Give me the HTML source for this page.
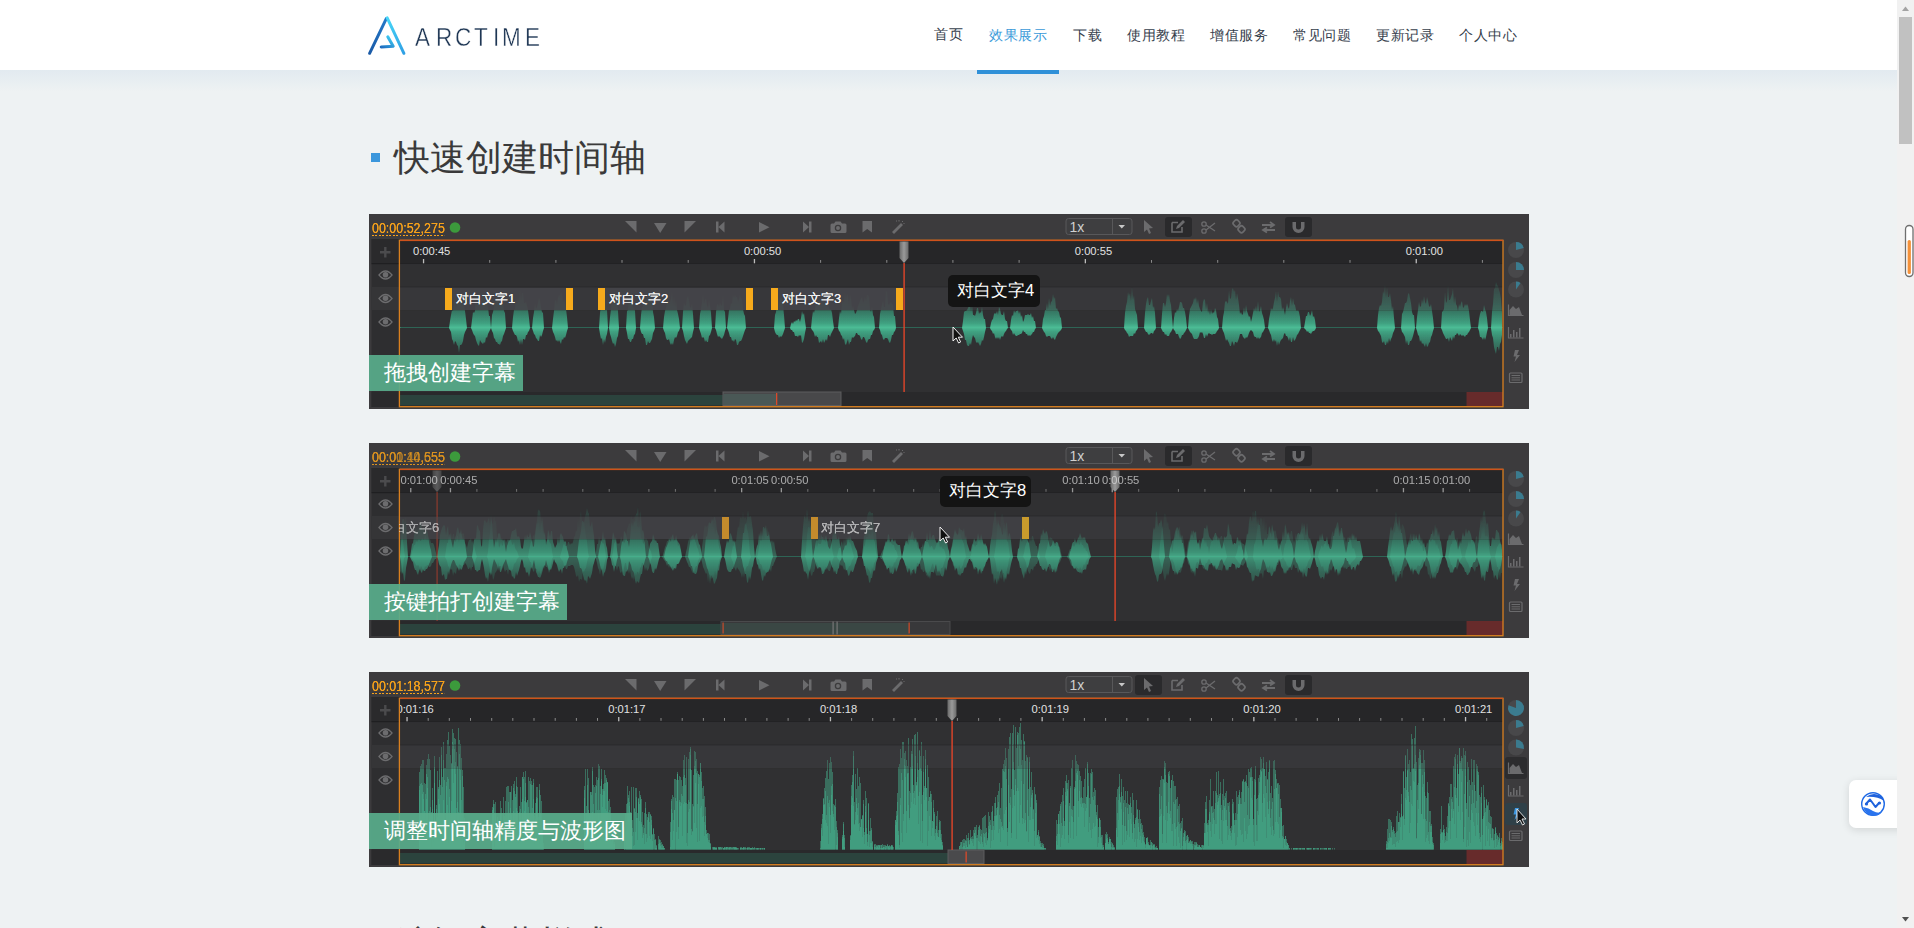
<!DOCTYPE html><html><head><meta charset="utf-8"><style>
html,body{margin:0;padding:0;}
body{width:1914px;height:928px;overflow:hidden;position:relative;background:#eef2f3;font-family:"Liberation Sans",sans-serif;}
.abs{position:absolute;}
.lgl{position:absolute;top:22.5px;font-size:25px;line-height:28px;color:#1d3553;-webkit-text-stroke:0.4px #fff;transform:scaleX(0.9);transform-origin:0 0;}
#hdr{position:absolute;left:0;top:0;width:1897px;height:70px;background:#fff;}
#hshadow{position:absolute;left:0;top:70px;width:1897px;height:22px;background:linear-gradient(#e2eaf0,#eef2f3);}
.nav{position:absolute;top:26px;font-size:14px;letter-spacing:0.6px;color:#36404c;white-space:nowrap;line-height:16px;}
.panel{position:absolute;left:369px;width:1160px;height:195px;background:#3c3b3d;overflow:hidden;}
.tc{position:absolute;left:3px;top:5.6px;font-size:14.5px;color:#f7a21b;line-height:16px;transform:scaleX(0.86);transform-origin:0 0;text-shadow:0 0 0.3px #f7a21b;}
.tc:after{content:"";position:absolute;left:0;right:1px;top:15.2px;height:1.2px;background:repeating-linear-gradient(90deg,#f7a21b 0 2.2px,transparent 2.2px 4px);}
.rl{position:absolute;top:31px;font-size:11.2px;line-height:13px;color:#e2e2e2;white-space:nowrap;}
.st{position:absolute;top:77px;font-size:13px;line-height:16px;color:#f2f2f2;white-space:nowrap;text-shadow:0 0 0.5px #fff;}
.tt{position:absolute;font-size:16.6px;line-height:18px;color:#fff;white-space:nowrap;}
.gl{position:absolute;left:0;top:141px;height:36px;background:rgba(88,172,139,0.93);color:#fff;font-size:22px;line-height:36px;text-indent:15px;white-space:nowrap;}
.one{position:absolute;left:700.5px;top:4.5px;font-size:14px;line-height:16px;color:#d0d0d0;}
</style></head><body><div id="hdr"></div><div id="hshadow"></div><svg class="abs" style="left:366px;top:14px" width="44" height="44" viewBox="0 0 44 44">
<defs><linearGradient id="lg1" gradientUnits="userSpaceOnUse" x1="3.4" y1="39.4" x2="20" y2="5"><stop offset="0" stop-color="#1a5aa6"/><stop offset="1" stop-color="#2478c8"/></linearGradient>
<linearGradient id="lg2" gradientUnits="userSpaceOnUse" x1="21" y1="3.5" x2="38" y2="39.4"><stop offset="0" stop-color="#48d8f8"/><stop offset="1" stop-color="#2f9fe4"/></linearGradient>
<linearGradient id="lg3" gradientUnits="userSpaceOnUse" x1="22" y1="22" x2="15" y2="33"><stop offset="0" stop-color="#3cc6f0"/><stop offset="1" stop-color="#1e6cc0"/></linearGradient></defs>
<path d="M3.6 39.3 L20.3 4.6" stroke="url(#lg1)" stroke-width="3" stroke-linecap="round"/>
<path d="M21.2 3.9 L37.9 39.3" stroke="url(#lg2)" stroke-width="3" stroke-linecap="round"/>
<path d="M21.8 22.8 L27.2 32.3 L15.2 32.9" fill="none" stroke="url(#lg3)" stroke-width="3" stroke-linecap="round" stroke-linejoin="round"/>
</svg><div class="lgl" style="left:415.0px">A</div><div class="lgl" style="left:435.6px">R</div><div class="lgl" style="left:455.2px">C</div><div class="lgl" style="left:473.8px">T</div><div class="lgl" style="left:492.8px">I</div><div class="lgl" style="left:502.4px">M</div><div class="lgl" style="left:525.4px">E</div><div class="nav" style="left:934px;top:26.4px;color:#36404c">首页</div><div class="nav" style="left:989px;top:27.4px;color:#3a9ad9">效果展示</div><div class="nav" style="left:1073px;top:27.4px;color:#36404c">下载</div><div class="nav" style="left:1127px;top:27.4px;color:#36404c">使用教程</div><div class="nav" style="left:1210px;top:27.4px;color:#36404c">增值服务</div><div class="nav" style="left:1293px;top:27.4px;color:#36404c">常见问题</div><div class="nav" style="left:1376px;top:27.4px;color:#36404c">更新记录</div><div class="nav" style="left:1459px;top:27.4px;color:#36404c">个人中心</div><div class="abs" style="left:977px;top:70px;width:82px;height:4px;background:#2f90d8"></div><div class="abs" style="left:371px;top:153px;width:9px;height:9px;background:#3b97dc"></div><div class="abs" style="left:394px;top:137px;font-size:36px;line-height:42px;color:#3a3a3a">快速创建时间轴</div><div class="abs" style="left:395px;top:923px;font-size:36px;line-height:42px;color:#3a3a3a">编辑字幕样式</div><div class="panel" style="top:214px"><svg width="1160" height="195" style="position:absolute;left:0;top:0"><defs><linearGradient id="phg1" x1="0" x2="1" y1="0" y2="0"><stop offset="0" stop-color="#6a6a6a"/><stop offset="0.5" stop-color="#9a9a9a"/><stop offset="1" stop-color="#6a6a6a"/></linearGradient><linearGradient id="wg1" gradientUnits="userSpaceOnUse" x1="0" y1="71.5" x2="0" y2="155.5"><stop offset="0" stop-color="#358f74" stop-opacity="0.25"/><stop offset="0.3" stop-color="#3a9f7f" stop-opacity="0.62"/><stop offset="0.45" stop-color="#41ab88" stop-opacity="0.92"/><stop offset="0.5" stop-color="#4cbc95"/><stop offset="0.55" stop-color="#41ab88" stop-opacity="0.92"/><stop offset="0.7" stop-color="#3a9f7f" stop-opacity="0.62"/><stop offset="1" stop-color="#358f74" stop-opacity="0.25"/></linearGradient><filter id="bl1" x="-1%" y="-10%" width="102%" height="120%"><feGaussianBlur stdDeviation="0.55"/></filter><linearGradient id="rg1" gradientUnits="userSpaceOnUse" x1="0" y1="50" x2="0" y2="178"><stop offset="0" stop-color="#3c9c7e" stop-opacity="0.55"/><stop offset="0.6" stop-color="#40a886" stop-opacity="0.85"/><stop offset="1" stop-color="#45b28e"/></linearGradient><clipPath id="mc1"><rect x="31" y="27" width="1103" height="165"/></clipPath></defs><rect x="796" y="3" width="27" height="20" rx="3" fill="#2a2a2c"/><rect x="916" y="3" width="27" height="20" rx="3" fill="#2a2a2c"/><path d="M256 7 H267.5 V18.5 Z" fill="#6b6b6d"/><path d="M285 9 H297.5 L291.2 19 Z" fill="#6b6b6d"/><path d="M315.5 7 H327 L315.5 18.5 Z" fill="#6b6b6d"/><path d="M347 7.5 H349.5 V18.5 H347 Z M349.5 13 L355.5 7.5 V18.5 Z" fill="#6b6b6d"/><path d="M390 8 L400.5 13.2 L390 18.5 Z" fill="#6b6b6d"/><path d="M434 7.5 L440 13 L434 18.5 Z M440 7.5 H442.5 V18.5 H440 Z" fill="#6b6b6d"/><path d="M462 9.5 h3 l1.5 -2 h5 l1.5 2 h3 a1.5 1.5 0 0 1 1.5 1.5 v6.5 a1.5 1.5 0 0 1 -1.5 1.5 h-13 a1.5 1.5 0 0 1 -1.5 -1.5 v-6.5 a1.5 1.5 0 0 1 1.5 -1.5 Z" fill="#6b6b6d"/><circle cx="469" cy="14" r="2.6" fill="none" stroke="#3c3b3d" stroke-width="1.3"/><path d="M493.5 7 H503 V18.5 L498.2 15 L493.5 18.5 Z" fill="#6b6b6d"/><path d="M523 18 L532 9 L534 11 L525 20 Z" fill="#6b6b6d"/><path d="M527 7 l1 0 M530 6 l0 1.5 M533 7 l1 1 M535 9 l0 1" stroke="#6b6b6d" stroke-width="1"/><rect x="697" y="4.5" width="66" height="16" rx="2.5" fill="#3e3e40" stroke="#58585a" stroke-width="1"/><line x1="743.5" y1="5" x2="743.5" y2="20" stroke="#58585a" stroke-width="1"/><path d="M749.5 11 H756 L752.8 14.5 Z" fill="#c8c8c8"/><path d="M775 6 L784 14 L780 14.5 L782 19 L780 20 L778 15.5 L775 18 Z" fill="#6b6b6d"/><path d="M803 8.5 H809 M803 8.5 V18 H813 V13" fill="none" stroke="#6b6b6d" stroke-width="1.6"/><path d="M807 15 L808 12 L814 6 L816 8 L810 14 Z" fill="#6b6b6d"/><circle cx="835" cy="10" r="2.2" fill="none" stroke="#6b6b6d" stroke-width="1.3"/><circle cx="835" cy="17" r="2.2" fill="none" stroke="#6b6b6d" stroke-width="1.3"/><path d="M837 11 L846 17 M837 16 L846 9" stroke="#6b6b6d" stroke-width="1.3"/><rect x="864.5" y="6.3" width="6" height="6" rx="2" transform="rotate(45 867.5 9.3)" fill="none" stroke="#6b6b6d" stroke-width="1.7"/><rect x="869.5" y="12.3" width="6" height="6" rx="2" transform="rotate(45 872.5 15.3)" fill="none" stroke="#6b6b6d" stroke-width="1.7"/><path d="M893 11 H904 M901 8 L905 11 L901 13.5 M906 16 H895 M898 13.5 L894 16 L898 18.5" fill="none" stroke="#6b6b6d" stroke-width="1.8"/><path d="M923.5 8 V13 a6 6 0 0 0 12 0 V8 h-3.5 V13 a2.5 2.5 0 0 1 -5 0 V8 Z" fill="#6b6b6d"/><circle cx="86" cy="13.5" r="5.3" fill="#3c9a3c"/><rect x="2.5" y="25" width="28" height="168" fill="#2e2e30"/><rect x="2.5" y="25" width="28" height="24" fill="#2a2a2c"/><rect x="2.5" y="49" width="28" height="1.2" fill="#1f1f21"/><rect x="2.5" y="73" width="28" height="23" fill="#353537"/><rect x="2.5" y="178" width="28" height="15" fill="#2a2a2c"/><path d="M11 38.3 H21.5 M16.3 33 V43.5" stroke="#4b4b4d" stroke-width="2.4"/><path d="M10.0 61 Q16.5 53 23.0 61 Q16.5 69 10.0 61 Z" fill="none" stroke="#6c6c6e" stroke-width="1.3"/><circle cx="16.5" cy="60.7" r="2.8" fill="#6c6c6e"/><path d="M10.0 84.5 Q16.5 76.5 23.0 84.5 Q16.5 92.5 10.0 84.5 Z" fill="none" stroke="#6c6c6e" stroke-width="1.3"/><circle cx="16.5" cy="84.2" r="2.8" fill="#6c6c6e"/><path d="M10.0 108 Q16.5 100 23.0 108 Q16.5 116 10.0 108 Z" fill="none" stroke="#6c6c6e" stroke-width="1.3"/><circle cx="16.5" cy="107.7" r="2.8" fill="#6c6c6e"/><g clip-path="url(#mc1)"><rect x="31" y="27" width="1103" height="22.5" fill="#262628"/><rect x="31" y="49.3" width="1103" height="1" fill="#1d1d1f"/><rect x="31" y="50.3" width="1103" height="128" fill="#303032"/><rect x="31" y="178" width="1103" height="14" fill="#29292b"/><rect x="31" y="113.0" width="1103" height="1" fill="#2e6455"/><path d="M31,113.5L32,114L33,114L34,114L35,114L36,114L37,114L38,114L39,114L40,114L41,114L42,114L43,114L44,114L45,114L46,114L47,114L48,114L49,114L50,114L51,114L52,114L53,114L54,114L55,114L56,114L57,114L58,114L59,114L60,114L61,114L62,114L63,114L64,114L65,114L66,114L67,114L68,114L69,114L70,114L71,114L72,114L73,114L74,114L75,114L76,114L77,114L78,114L79,114L80,114L81,107L82,101L83,96L84,97L85,88L86,83L87,93L88,90L89,82L90,84L91,78L92,92L93,85L94,90L95,92L96,97L97,105L98,114L99,114L100,114L101,114L102,114L103,106L104,98L105,99L106,97L107,83L108,93L109,86L110,90L111,88L112,85L113,79L114,82L115,84L116,84L117,87L118,90L119,93L120,102L121,102L122,114L123,101L124,98L125,93L126,85L127,92L128,79L129,86L130,92L131,84L132,83L133,86L134,90L135,97L136,99L137,114L138,114L139,114L140,114L141,114L142,114L143,114L144,103L145,96L146,95L147,86L148,92L149,83L150,89L151,77L152,87L153,79L154,79L155,89L156,89L157,88L158,92L159,96L160,104L161,114L162,114L163,114L164,104L165,98L166,90L167,95L168,93L169,89L170,84L171,87L172,94L173,98L174,99L175,114L176,114L177,114L178,114L179,114L180,114L181,114L182,114L183,114L184,105L185,97L186,87L187,86L188,91L189,84L190,81L191,82L192,78L193,80L194,89L195,85L196,89L197,95L198,103L199,114L200,114L201,114L202,114L203,114L204,114L205,114L206,114L207,114L208,114L209,114L210,114L211,114L212,114L213,114L214,114L215,114L216,114L217,114L218,114L219,114L220,114L221,114L222,114L223,114L224,114L225,114L226,114L227,114L228,114L229,114L230,114L231,99L232,92L233,87L234,86L235,81L236,82L237,93L238,96L239,114L240,114L241,103L242,95L243,87L244,91L245,87L246,85L247,82L248,87L249,97L250,114L251,114L252,114L253,114L254,114L255,114L256,114L257,114L258,97L259,96L260,83L261,84L262,77L263,84L264,94L265,93L266,97L267,114L268,114L269,114L270,114L271,114L272,101L273,93L274,93L275,83L276,85L277,87L278,82L279,84L280,77L281,80L282,85L283,87L284,98L285,103L286,114L287,114L288,114L289,114L290,114L291,114L292,114L293,114L294,114L295,103L296,97L297,94L298,90L299,84L300,91L301,88L302,85L303,78L304,92L305,83L306,93L307,87L308,96L309,100L310,105L311,114L312,114L313,114L314,98L315,89L316,92L317,91L318,84L319,82L320,87L321,93L322,94L323,90L324,100L325,114L326,114L327,114L328,114L329,114L330,114L331,100L332,95L333,89L334,81L335,90L336,86L337,85L338,91L339,94L340,86L341,92L342,99L343,114L344,114L345,114L346,114L347,98L348,91L349,90L350,93L351,89L352,91L353,92L354,82L355,96L356,98L357,114L358,114L359,105L360,96L361,95L362,89L363,90L364,81L365,84L366,81L367,83L368,83L369,88L370,85L371,81L372,84L373,86L374,95L375,100L376,102L377,114L378,114L379,114L380,114L381,114L382,114L383,114L384,114L385,114L386,114L387,114L388,114L389,114L390,114L391,114L392,114L393,114L394,114L395,114L396,114L397,114L398,114L399,114L400,114L401,114L402,114L403,114L404,114L405,114L406,101L407,98L408,87L409,80L410,90L411,85L412,82L413,87L414,91L415,101L416,114L417,114L418,114L419,114L420,114L421,114L422,110L423,108L424,110L425,107L426,108L427,106L428,107L429,105L430,105L431,108L432,104L433,97L434,101L435,99L436,107L437,114L438,114L439,114L440,114L441,114L442,114L443,104L444,97L445,99L446,95L447,90L448,92L449,90L450,85L451,86L452,92L453,83L454,85L455,91L456,88L457,84L458,95L459,88L460,94L461,96L462,95L463,99L464,107L465,114L466,114L467,114L468,114L469,114L470,104L471,97L472,100L473,89L474,87L475,89L476,79L477,86L478,80L479,82L480,92L481,81L482,85L483,95L484,92L485,96L486,100L487,99L488,96L489,92L490,90L491,87L492,85L493,83L494,89L495,87L496,83L497,88L498,81L499,81L500,83L501,95L502,98L503,93L504,101L505,103L506,114L507,114L508,114L509,114L510,114L511,100L512,95L513,91L514,87L515,93L516,93L517,77L518,78L519,90L520,91L521,89L522,88L523,90L524,91L525,102L526,102L527,114L528,114L529,114L530,114L531,114L532,114L533,114L534,114L535,114L536,114L537,114L538,114L539,114L540,114L541,114L542,114L543,114L544,114L545,114L546,114L547,114L548,114L549,114L550,114L551,114L552,114L553,114L554,114L555,114L556,114L557,114L558,114L559,114L560,114L561,114L562,114L563,114L564,114L565,114L566,114L567,114L568,114L569,114L570,114L571,114L572,114L573,114L574,114L575,114L576,114L577,114L578,114L579,114L580,114L581,114L582,114L583,114L584,114L585,114L586,114L587,114L588,114L589,114L590,114L591,114L592,114L593,114L594,107L595,98L596,97L597,97L598,96L599,94L600,92L601,90L602,98L603,91L604,101L605,101L606,102L607,99L608,94L609,94L610,100L611,98L612,99L613,93L614,101L615,105L616,105L617,114L618,114L619,114L620,114L621,114L622,109L623,106L624,105L625,100L626,99L627,100L628,97L629,101L630,93L631,95L632,100L633,101L634,101L635,97L636,105L637,107L638,107L639,114L640,114L641,114L642,106L643,101L644,102L645,96L646,99L647,97L648,97L649,96L650,100L651,97L652,103L653,101L654,108L655,106L656,101L657,101L658,101L659,100L660,101L661,101L662,99L663,104L664,102L665,107L666,107L667,114L668,114L669,114L670,114L671,114L672,114L673,114L674,105L675,102L676,96L677,96L678,89L679,96L680,84L681,92L682,88L683,87L684,80L685,85L686,83L687,95L688,94L689,97L690,98L691,103L692,104L693,114L694,114L695,114L696,114L697,114L698,114L699,114L700,114L701,114L702,114L703,114L704,114L705,114L706,114L707,114L708,114L709,114L710,114L711,114L712,114L713,114L714,114L715,114L716,114L717,114L718,114L719,114L720,114L721,114L722,114L723,114L724,114L725,114L726,114L727,114L728,114L729,114L730,114L731,114L732,114L733,114L734,114L735,114L736,114L737,114L738,114L739,114L740,114L741,114L742,114L743,114L744,114L745,114L746,114L747,114L748,114L749,114L750,114L751,114L752,114L753,114L754,114L755,114L756,99L757,92L758,88L759,78L760,82L761,79L762,87L763,73L764,86L765,81L766,95L767,98L768,101L769,114L770,114L771,114L772,114L773,114L774,114L775,114L776,99L777,90L778,85L779,83L780,91L781,91L782,87L783,84L784,94L785,92L786,99L787,114L788,114L789,114L790,114L791,114L792,114L793,100L794,89L795,89L796,93L797,89L798,80L799,83L800,80L801,87L802,91L803,103L804,114L805,104L806,98L807,99L808,95L809,97L810,93L811,88L812,88L813,89L814,94L815,94L816,98L817,104L818,114L819,114L820,102L821,95L822,93L823,91L824,89L825,84L826,86L827,83L828,90L829,85L830,92L831,95L832,97L833,98L834,88L835,85L836,86L837,96L838,89L839,99L840,95L841,101L842,95L843,100L844,98L845,99L846,94L847,96L848,103L849,105L850,114L851,114L852,114L853,114L854,103L855,98L856,88L857,87L858,88L859,90L860,76L861,85L862,84L863,75L864,74L865,78L866,76L867,86L868,79L869,84L870,91L871,100L872,98L873,101L874,100L875,93L876,100L877,91L878,97L879,100L880,103L881,102L882,108L883,104L884,99L885,94L886,97L887,92L888,98L889,87L890,98L891,96L892,92L893,99L894,102L895,106L896,114L897,114L898,114L899,114L900,105L901,100L902,94L903,96L904,94L905,88L906,84L907,77L908,88L909,77L910,83L911,83L912,85L913,96L914,93L915,96L916,101L917,94L918,89L919,93L920,95L921,87L922,83L923,92L924,84L925,90L926,91L927,96L928,97L929,96L930,98L931,103L932,114L933,114L934,114L935,114L936,108L937,102L938,102L939,98L940,98L941,102L942,100L943,96L944,103L945,102L946,106L947,114L948,114L949,114L950,114L951,114L952,114L953,114L954,114L955,114L956,114L957,114L958,114L959,114L960,114L961,114L962,114L963,114L964,114L965,114L966,114L967,114L968,114L969,114L970,114L971,114L972,114L973,114L974,114L975,114L976,114L977,114L978,114L979,114L980,114L981,114L982,114L983,114L984,114L985,114L986,114L987,114L988,114L989,114L990,114L991,114L992,114L993,114L994,114L995,114L996,114L997,114L998,114L999,114L1000,114L1001,114L1002,114L1003,114L1004,114L1005,114L1006,114L1007,114L1008,114L1009,101L1010,94L1011,91L1012,92L1013,88L1014,77L1015,80L1016,71L1017,84L1018,73L1019,83L1020,83L1021,79L1022,86L1023,96L1024,92L1025,104L1026,114L1027,114L1028,114L1029,114L1030,114L1031,114L1032,114L1033,100L1034,98L1035,94L1036,89L1037,89L1038,87L1039,80L1040,79L1041,84L1042,89L1043,98L1044,101L1045,101L1046,114L1047,114L1048,103L1049,96L1050,88L1051,93L1052,92L1053,85L1054,90L1055,82L1056,88L1057,90L1058,83L1059,87L1060,92L1061,93L1062,90L1063,97L1064,104L1065,114L1066,114L1067,114L1068,114L1069,114L1070,114L1071,114L1072,114L1073,98L1074,97L1075,95L1076,78L1077,89L1078,87L1079,71L1080,86L1081,86L1082,83L1083,80L1084,74L1085,90L1086,82L1087,90L1088,92L1089,97L1090,90L1091,93L1092,89L1093,87L1094,94L1095,93L1096,90L1097,92L1098,90L1099,92L1100,97L1101,106L1102,114L1103,114L1104,114L1105,114L1106,114L1107,114L1108,114L1109,114L1110,105L1111,100L1112,97L1113,97L1114,98L1115,91L1116,95L1117,98L1118,104L1119,114L1120,114L1121,114L1122,114L1123,98L1124,90L1125,75L1126,74L1127,68L1128,71L1129,72L1130,76L1131,79L1132,85L1133,99L1133,121L1132,128L1131,130L1130,137L1129,133L1128,133L1127,140L1126,137L1125,133L1124,124L1123,121L1122,114L1121,114L1120,114L1119,114L1118,118L1117,123L1116,126L1115,123L1114,126L1113,124L1112,123L1111,123L1110,117L1109,114L1108,114L1107,114L1106,114L1105,114L1104,114L1103,114L1102,114L1101,116L1100,118L1099,119L1098,121L1097,121L1096,123L1095,122L1094,121L1093,122L1092,121L1091,120L1090,122L1089,120L1088,119L1087,121L1086,121L1085,125L1084,122L1083,127L1082,125L1081,123L1080,128L1079,124L1078,125L1077,125L1076,123L1075,121L1074,119L1073,116L1072,114L1071,114L1070,114L1069,114L1068,114L1067,114L1066,114L1065,114L1064,117L1063,121L1062,123L1061,128L1060,129L1059,132L1058,133L1057,129L1056,133L1055,131L1054,129L1053,130L1052,126L1051,128L1050,122L1049,121L1048,117L1047,114L1046,114L1045,118L1044,122L1043,125L1042,127L1041,127L1040,131L1039,131L1038,126L1037,130L1036,123L1035,121L1034,119L1033,118L1032,114L1031,114L1030,114L1029,114L1028,114L1027,114L1026,114L1025,117L1024,119L1023,123L1022,125L1021,128L1020,124L1019,130L1018,127L1017,131L1016,131L1015,127L1014,129L1013,128L1012,122L1011,120L1010,118L1009,117L1008,114L1007,114L1006,114L1005,114L1004,114L1003,114L1002,114L1001,114L1000,114L999,114L998,114L997,114L996,114L995,114L994,114L993,114L992,114L991,114L990,114L989,114L988,114L987,114L986,114L985,114L984,114L983,114L982,114L981,114L980,114L979,114L978,114L977,114L976,114L975,114L974,114L973,114L972,114L971,114L970,114L969,114L968,114L967,114L966,114L965,114L964,114L963,114L962,114L961,114L960,114L959,114L958,114L957,114L956,114L955,114L954,114L953,114L952,114L951,114L950,114L949,114L948,114L947,114L946,116L945,117L944,117L943,118L942,120L941,119L940,119L939,117L938,118L937,116L936,115L935,114L934,114L933,114L932,114L931,116L930,118L929,120L928,121L927,124L926,126L925,127L924,123L923,128L922,128L921,123L920,127L919,124L918,122L917,122L916,119L915,120L914,124L913,125L912,126L911,128L910,131L909,127L908,132L907,126L906,128L905,125L904,128L903,126L902,121L901,119L900,116L899,114L898,114L897,114L896,114L895,116L894,118L893,119L892,123L891,124L890,125L889,123L888,125L887,123L886,123L885,122L884,118L883,117L882,116L881,117L880,119L879,122L878,124L877,123L876,125L875,124L874,123L873,120L872,120L871,120L870,124L869,127L868,129L867,128L866,128L865,132L864,129L863,127L862,132L861,132L860,129L859,127L858,125L857,127L856,123L855,119L854,117L853,114L852,114L851,114L850,114L849,116L848,117L847,119L846,120L845,120L844,120L843,121L842,120L841,120L840,119L839,120L838,123L837,120L836,124L835,124L834,120L833,118L832,119L831,118L830,122L829,124L828,125L827,125L826,125L825,125L824,123L823,120L822,119L821,118L820,116L819,114L818,114L817,116L816,118L815,119L814,121L813,121L812,124L811,125L810,123L809,120L808,120L807,120L806,117L805,116L804,114L803,116L802,118L801,119L800,122L799,122L798,122L797,120L796,121L795,118L794,118L793,116L792,114L791,114L790,114L789,114L788,114L787,114L786,116L785,117L784,120L783,119L782,119L781,120L780,121L779,120L778,118L777,118L776,116L775,114L774,114L773,114L772,114L771,114L770,114L769,114L768,116L767,117L766,120L765,119L764,122L763,122L762,122L761,122L760,123L759,120L758,119L757,117L756,116L755,114L754,114L753,114L752,114L751,114L750,114L749,114L748,114L747,114L746,114L745,114L744,114L743,114L742,114L741,114L740,114L739,114L738,114L737,114L736,114L735,114L734,114L733,114L732,114L731,114L730,114L729,114L728,114L727,114L726,114L725,114L724,114L723,114L722,114L721,114L720,114L719,114L718,114L717,114L716,114L715,114L714,114L713,114L712,114L711,114L710,114L709,114L708,114L707,114L706,114L705,114L704,114L703,114L702,114L701,114L700,114L699,114L698,114L697,114L696,114L695,114L694,114L693,114L692,116L691,117L690,118L689,119L688,121L687,123L686,126L685,125L684,123L683,125L682,124L681,122L680,122L679,122L678,123L677,122L676,119L675,118L674,116L673,114L672,114L671,114L670,114L669,114L668,114L667,114L666,115L665,118L664,118L663,120L662,121L661,122L660,121L659,122L658,120L657,120L656,118L655,118L654,116L653,119L652,120L651,120L650,121L649,121L648,122L647,122L646,121L645,119L644,121L643,117L642,116L641,114L640,114L639,114L638,115L637,117L636,118L635,120L634,123L633,122L632,123L631,126L630,123L629,125L628,123L627,125L626,123L625,119L624,120L623,117L622,116L621,114L620,114L619,114L618,114L617,114L616,118L615,123L614,127L613,126L612,130L611,132L610,130L609,128L608,129L607,128L606,124L605,123L604,121L603,125L602,131L601,129L600,132L599,132L598,131L597,126L596,126L595,120L594,117L593,114L592,114L591,114L590,114L589,114L588,114L587,114L586,114L585,114L584,114L583,114L582,114L581,114L580,114L579,114L578,114L577,114L576,114L575,114L574,114L573,114L572,114L571,114L570,114L569,114L568,114L567,114L566,114L565,114L564,114L563,114L562,114L561,114L560,114L559,114L558,114L557,114L556,114L555,114L554,114L553,114L552,114L551,114L550,114L549,114L548,114L547,114L546,114L545,114L544,114L543,114L542,114L541,114L540,114L539,114L538,114L537,114L536,114L535,114L534,114L533,114L532,114L531,114L530,114L529,114L528,114L527,114L526,117L525,118L524,121L523,121L522,126L521,129L520,128L519,125L518,124L517,124L516,124L515,126L514,125L513,121L512,120L511,116L510,114L509,114L508,114L507,114L506,114L505,116L504,117L503,121L502,121L501,125L500,125L499,126L498,129L497,128L496,125L495,123L494,123L493,126L492,125L491,122L490,121L489,121L488,119L487,119L486,122L485,123L484,124L483,123L482,128L481,128L480,131L479,125L478,128L477,131L476,130L475,124L474,126L473,122L472,121L471,118L470,117L469,114L468,114L467,114L466,114L465,114L464,116L463,118L462,120L461,123L460,121L459,121L458,127L457,125L456,127L455,129L454,125L453,129L452,127L451,128L450,129L449,123L448,123L447,121L446,123L445,119L444,117L443,116L442,114L441,114L440,114L439,114L438,114L437,114L436,119L435,125L434,128L433,129L432,121L431,122L430,121L429,123L428,122L427,122L426,122L425,118L424,118L423,116L422,116L421,114L420,114L419,114L418,114L417,114L416,114L415,117L414,120L413,122L412,123L411,122L410,124L409,121L408,121L407,120L406,118L405,114L404,114L403,114L402,114L401,114L400,114L399,114L398,114L397,114L396,114L395,114L394,114L393,114L392,114L391,114L390,114L389,114L388,114L387,114L386,114L385,114L384,114L383,114L382,114L381,114L380,114L379,114L378,114L377,114L376,116L375,119L374,122L373,125L372,127L371,127L370,128L369,131L368,131L367,126L366,125L365,128L364,126L363,127L362,123L361,123L360,119L359,116L358,114L357,114L356,117L355,121L354,123L353,125L352,124L351,123L350,122L349,123L348,120L347,116L346,114L345,114L344,114L343,114L342,118L341,121L340,122L339,128L338,128L337,126L336,128L335,124L334,123L333,124L332,120L331,117L330,114L329,114L328,114L327,114L326,114L325,114L324,118L323,123L322,124L321,125L320,126L319,127L318,130L317,128L316,126L315,122L314,117L313,114L312,114L311,114L310,117L309,118L308,122L307,124L306,123L305,126L304,131L303,129L302,131L301,129L300,125L299,126L298,126L297,124L296,119L295,117L294,114L293,114L292,114L291,114L290,114L289,114L288,114L287,114L286,114L285,117L284,119L283,125L282,127L281,129L280,129L279,127L278,131L277,131L276,124L275,124L274,120L273,120L272,118L271,114L270,114L269,114L268,114L267,114L266,120L265,121L264,125L263,125L262,128L261,128L260,125L259,125L258,119L257,114L256,114L255,114L254,114L253,114L252,114L251,114L250,114L249,122L248,124L247,130L246,133L245,129L244,130L243,127L242,123L241,120L240,114L239,114L238,120L237,123L236,129L235,125L234,131L233,124L232,125L231,120L230,114L229,114L228,114L227,114L226,114L225,114L224,114L223,114L222,114L221,114L220,114L219,114L218,114L217,114L216,114L215,114L214,114L213,114L212,114L211,114L210,114L209,114L208,114L207,114L206,114L205,114L204,114L203,114L202,114L201,114L200,114L199,114L198,117L197,121L196,124L195,123L194,126L193,125L192,130L191,128L190,126L189,128L188,126L187,127L186,123L185,120L184,118L183,114L182,114L181,114L180,114L179,114L178,114L177,114L176,114L175,114L174,117L173,121L172,123L171,121L170,127L169,127L168,125L167,124L166,121L165,120L164,117L163,114L162,114L161,114L160,117L159,118L158,121L157,121L156,126L155,125L154,125L153,131L152,125L151,131L150,126L149,128L148,123L147,121L146,121L145,119L144,117L143,114L142,114L141,114L140,114L139,114L138,114L137,114L136,117L135,120L134,122L133,127L132,128L131,131L130,130L129,130L128,128L127,128L126,125L125,124L124,119L123,117L122,114L121,116L120,118L119,120L118,124L117,123L116,129L115,128L114,130L113,129L112,128L111,126L110,132L109,131L108,129L107,126L106,122L105,121L104,119L103,116L102,114L101,114L100,114L99,114L98,114L97,116L96,118L95,121L94,127L93,130L92,131L91,131L90,139L89,132L88,131L87,128L86,127L85,131L84,127L83,125L82,118L81,116L80,114L79,114L78,114L77,114L76,114L75,114L74,114L73,114L72,114L71,114L70,114L69,114L68,114L67,114L66,114L65,114L64,114L63,114L62,114L61,114L60,114L59,114L58,114L57,114L56,114L55,114L54,114L53,114L52,114L51,114L50,114L49,114L48,114L47,114L46,114L45,114L44,114L43,114L42,114L41,114L40,114L39,114L38,114L37,114L36,114L35,114L34,114L33,114L32,114L31,114Z" fill="url(#wg1)" filter="url(#bl1)"/><rect x="31" y="73" width="1103" height="23" fill="#4a4a4e" opacity="0.28"/><rect x="31" y="72.5" width="1103" height="1" fill="#262628" opacity="0.6"/><rect x="31" y="96" width="1103" height="1" fill="#2a2a2c" opacity="0.25"/><g opacity="1"><rect x="53.9" y="45" width="1.3" height="4.299999999999997" fill="#bdbdbd"/><rect x="120.2" y="46" width="1" height="2.799999999999997" fill="#8a8a8a"/><rect x="186.4" y="46" width="1" height="2.799999999999997" fill="#8a8a8a"/><rect x="252.5" y="46" width="1" height="2.799999999999997" fill="#8a8a8a"/><rect x="318.7" y="46" width="1" height="2.799999999999997" fill="#8a8a8a"/><rect x="384.8" y="45" width="1.3" height="4.299999999999997" fill="#bdbdbd"/><rect x="451.1" y="46" width="1" height="2.799999999999997" fill="#8a8a8a"/><rect x="517.3" y="46" width="1" height="2.799999999999997" fill="#8a8a8a"/><rect x="583.4" y="46" width="1" height="2.799999999999997" fill="#8a8a8a"/><rect x="649.6" y="46" width="1" height="2.799999999999997" fill="#8a8a8a"/><rect x="715.7" y="45" width="1.3" height="4.299999999999997" fill="#bdbdbd"/><rect x="782.0" y="46" width="1" height="2.799999999999997" fill="#8a8a8a"/><rect x="848.2" y="46" width="1" height="2.799999999999997" fill="#8a8a8a"/><rect x="914.3" y="46" width="1" height="2.799999999999997" fill="#8a8a8a"/><rect x="980.5" y="46" width="1" height="2.799999999999997" fill="#8a8a8a"/><rect x="1046.6" y="45" width="1.3" height="4.299999999999997" fill="#bdbdbd"/><rect x="1112.9" y="46" width="1" height="2.799999999999997" fill="#8a8a8a"/></g><rect x="31" y="181" width="323" height="10.5" fill="#2b433d"/><rect x="354" y="178" width="118" height="13.5" fill="#48484a" stroke="#5c5c5e" stroke-width="1"/><rect x="354.5" y="180" width="53" height="11" fill="#4a5856"/><rect x="407" y="179" width="1.3" height="12" fill="#d94a2a"/><rect x="1097.5" y="178" width="36.5" height="14" fill="#672b2b"/></g><rect x="30.4" y="26.3" width="1103.6" height="166.4" fill="none" stroke="#d9801f" stroke-width="1.3"/><rect x="31" y="25.8" width="1103" height="1.3" fill="#d0521b"/><g opacity="1"><rect x="534.4" y="49" width="1.4" height="129" fill="#e0452a"/><path d="M530.5 27.5 H539.5 V44 L535 49 L530.5 44 Z" fill="url(#phg1)"/></g><circle cx="1147" cy="36" r="8" fill="#48484a"/><path d="M1147 36 V28 A8 8 0 0 1 1154.73 33.93 Z" fill="#3b7b8e"/><circle cx="1147" cy="56" r="8" fill="#48484a"/><path d="M1147 56 V48 A8 8 0 0 1 1155.00 56.00 Z" fill="#3b7b8e"/><circle cx="1147" cy="75.5" r="8" fill="#48484a"/><path d="M1147 75.5 V67.5 A8 8 0 0 1 1151.59 68.95 Z" fill="#3b7b8e"/><path d="M1139.5 90.5 V101.5 H1154.5" fill="none" stroke="#6b6b6d" stroke-width="1.2"/><path d="M1140.5 101 V96 L1144 92 L1147 95 L1150 93 L1153 101 Z" fill="#6b6b6d"/><path d="M1139.5 113 V124 H1154.5" fill="none" stroke="#6b6b6d" stroke-width="1.2"/><path d="M1141 120h1.5v3.5h-1.5z M1144 116h1.5v7.5h-1.5z M1147 118h1.5v5.5h-1.5z M1150 114h1.5v9.5h-1.5z" fill="#6b6b6d"/><path d="M1146 136 L1150 136 L1148 141 L1151 141 L1145.5 148 L1147 142.5 L1144.5 142.5 Z" fill="#6b6b6d"/><rect x="1140.5" y="159" width="12.5" height="9.5" rx="1" fill="none" stroke="#6b6b6d" stroke-width="1.2"/><path d="M1142.5 161.5 H1151 M1142.5 163.8 H1151 M1142.5 166 H1151" stroke="#6b6b6d" stroke-width="1"/><rect x="76" y="74" width="128" height="22" fill="#46464a" opacity="0.88"/><rect x="76" y="74" width="7" height="22" fill="#f6aa1c"/><rect x="197" y="74" width="7" height="22" fill="#f6aa1c"/><rect x="229" y="74" width="155" height="22" fill="#46464a" opacity="0.88"/><rect x="229" y="74" width="7" height="22" fill="#f6aa1c"/><rect x="377" y="74" width="7" height="22" fill="#f6aa1c"/><rect x="402" y="74" width="132" height="22" fill="#46464a" opacity="0.88"/><rect x="402" y="74" width="7" height="22" fill="#f6aa1c"/><rect x="527" y="74" width="7" height="22" fill="#f6aa1c"/><path d="M584 113 L584 127 L587.2 124 L589.6 129 L591.6 128 L589.3 123.2 L593.5 123.2 Z" fill="#111" stroke="#f2f2f2" stroke-width="1"/><rect x="579" y="61" width="92" height="32" rx="5" fill="#141414"/></svg><div class="tc">00:00:52,275</div><div class="rl" style="left:44.0px">0:00:45</div><div class="rl" style="left:374.9px">0:00:50</div><div class="rl" style="left:705.8px">0:00:55</div><div class="rl" style="left:1036.7px">0:01:00</div><div class="st" style="left:87px">对白文字1</div><div class="st" style="left:240px">对白文字2</div><div class="st" style="left:413px">对白文字3</div><div class="tt" style="left:588px;top:68px">对白文字4</div><div class="gl" style="width:154px">拖拽创建字幕</div><div class="one">1x</div></div><div class="panel" style="top:443px"><svg width="1160" height="195" style="position:absolute;left:0;top:0"><defs><linearGradient id="phg2" x1="0" x2="1" y1="0" y2="0"><stop offset="0" stop-color="#6a6a6a"/><stop offset="0.5" stop-color="#9a9a9a"/><stop offset="1" stop-color="#6a6a6a"/></linearGradient><linearGradient id="wg2" gradientUnits="userSpaceOnUse" x1="0" y1="71.5" x2="0" y2="155.5"><stop offset="0" stop-color="#358f74" stop-opacity="0.25"/><stop offset="0.3" stop-color="#3a9f7f" stop-opacity="0.62"/><stop offset="0.45" stop-color="#41ab88" stop-opacity="0.92"/><stop offset="0.5" stop-color="#4cbc95"/><stop offset="0.55" stop-color="#41ab88" stop-opacity="0.92"/><stop offset="0.7" stop-color="#3a9f7f" stop-opacity="0.62"/><stop offset="1" stop-color="#358f74" stop-opacity="0.25"/></linearGradient><filter id="bl2" x="-1%" y="-10%" width="102%" height="120%"><feGaussianBlur stdDeviation="0.55"/></filter><linearGradient id="rg2" gradientUnits="userSpaceOnUse" x1="0" y1="50" x2="0" y2="178"><stop offset="0" stop-color="#3c9c7e" stop-opacity="0.55"/><stop offset="0.6" stop-color="#40a886" stop-opacity="0.85"/><stop offset="1" stop-color="#45b28e"/></linearGradient><clipPath id="mc2"><rect x="31" y="27" width="1103" height="165"/></clipPath></defs><rect x="796" y="3" width="27" height="20" rx="3" fill="#2a2a2c"/><rect x="916" y="3" width="27" height="20" rx="3" fill="#2a2a2c"/><path d="M256 7 H267.5 V18.5 Z" fill="#6b6b6d"/><path d="M285 9 H297.5 L291.2 19 Z" fill="#6b6b6d"/><path d="M315.5 7 H327 L315.5 18.5 Z" fill="#6b6b6d"/><path d="M347 7.5 H349.5 V18.5 H347 Z M349.5 13 L355.5 7.5 V18.5 Z" fill="#6b6b6d"/><path d="M390 8 L400.5 13.2 L390 18.5 Z" fill="#6b6b6d"/><path d="M434 7.5 L440 13 L434 18.5 Z M440 7.5 H442.5 V18.5 H440 Z" fill="#6b6b6d"/><path d="M462 9.5 h3 l1.5 -2 h5 l1.5 2 h3 a1.5 1.5 0 0 1 1.5 1.5 v6.5 a1.5 1.5 0 0 1 -1.5 1.5 h-13 a1.5 1.5 0 0 1 -1.5 -1.5 v-6.5 a1.5 1.5 0 0 1 1.5 -1.5 Z" fill="#6b6b6d"/><circle cx="469" cy="14" r="2.6" fill="none" stroke="#3c3b3d" stroke-width="1.3"/><path d="M493.5 7 H503 V18.5 L498.2 15 L493.5 18.5 Z" fill="#6b6b6d"/><path d="M523 18 L532 9 L534 11 L525 20 Z" fill="#6b6b6d"/><path d="M527 7 l1 0 M530 6 l0 1.5 M533 7 l1 1 M535 9 l0 1" stroke="#6b6b6d" stroke-width="1"/><rect x="697" y="4.5" width="66" height="16" rx="2.5" fill="#3e3e40" stroke="#58585a" stroke-width="1"/><line x1="743.5" y1="5" x2="743.5" y2="20" stroke="#58585a" stroke-width="1"/><path d="M749.5 11 H756 L752.8 14.5 Z" fill="#c8c8c8"/><path d="M775 6 L784 14 L780 14.5 L782 19 L780 20 L778 15.5 L775 18 Z" fill="#6b6b6d"/><path d="M803 8.5 H809 M803 8.5 V18 H813 V13" fill="none" stroke="#6b6b6d" stroke-width="1.6"/><path d="M807 15 L808 12 L814 6 L816 8 L810 14 Z" fill="#6b6b6d"/><circle cx="835" cy="10" r="2.2" fill="none" stroke="#6b6b6d" stroke-width="1.3"/><circle cx="835" cy="17" r="2.2" fill="none" stroke="#6b6b6d" stroke-width="1.3"/><path d="M837 11 L846 17 M837 16 L846 9" stroke="#6b6b6d" stroke-width="1.3"/><rect x="864.5" y="6.3" width="6" height="6" rx="2" transform="rotate(45 867.5 9.3)" fill="none" stroke="#6b6b6d" stroke-width="1.7"/><rect x="869.5" y="12.3" width="6" height="6" rx="2" transform="rotate(45 872.5 15.3)" fill="none" stroke="#6b6b6d" stroke-width="1.7"/><path d="M893 11 H904 M901 8 L905 11 L901 13.5 M906 16 H895 M898 13.5 L894 16 L898 18.5" fill="none" stroke="#6b6b6d" stroke-width="1.8"/><path d="M923.5 8 V13 a6 6 0 0 0 12 0 V8 h-3.5 V13 a2.5 2.5 0 0 1 -5 0 V8 Z" fill="#6b6b6d"/><circle cx="86" cy="13.5" r="5.3" fill="#3c9a3c"/><rect x="2.5" y="25" width="28" height="168" fill="#2e2e30"/><rect x="2.5" y="25" width="28" height="24" fill="#2a2a2c"/><rect x="2.5" y="49" width="28" height="1.2" fill="#1f1f21"/><rect x="2.5" y="73" width="28" height="23" fill="#353537"/><rect x="2.5" y="178" width="28" height="15" fill="#2a2a2c"/><path d="M11 38.3 H21.5 M16.3 33 V43.5" stroke="#4b4b4d" stroke-width="2.4"/><path d="M10.0 61 Q16.5 53 23.0 61 Q16.5 69 10.0 61 Z" fill="none" stroke="#6c6c6e" stroke-width="1.3"/><circle cx="16.5" cy="60.7" r="2.8" fill="#6c6c6e"/><path d="M10.0 84.5 Q16.5 76.5 23.0 84.5 Q16.5 92.5 10.0 84.5 Z" fill="none" stroke="#6c6c6e" stroke-width="1.3"/><circle cx="16.5" cy="84.2" r="2.8" fill="#6c6c6e"/><path d="M10.0 108 Q16.5 100 23.0 108 Q16.5 116 10.0 108 Z" fill="none" stroke="#6c6c6e" stroke-width="1.3"/><circle cx="16.5" cy="107.7" r="2.8" fill="#6c6c6e"/><g clip-path="url(#mc2)"><rect x="31" y="27" width="1103" height="22.5" fill="#262628"/><rect x="31" y="49.3" width="1103" height="1" fill="#1d1d1f"/><rect x="31" y="50.3" width="1103" height="128" fill="#303032"/><rect x="31" y="178" width="1103" height="14" fill="#29292b"/><rect x="31" y="113.0" width="1103" height="1" fill="#2e6455"/><path d="M31,113.5L32,100L33,77L34,76L35,76L36,81L37,74L38,99L39,114L40,114L41,114L42,108L43,101L44,100L45,93L46,89L47,84L48,94L49,83L50,89L51,81L52,79L53,86L54,87L55,82L56,92L57,88L58,87L59,92L60,99L61,104L62,107L63,114L64,114L65,114L66,114L67,114L68,114L69,108L70,102L71,92L72,88L73,85L74,83L75,82L76,83L77,92L78,86L79,83L80,95L81,91L82,96L83,101L84,105L85,99L86,95L87,92L88,86L89,84L90,89L91,91L92,86L93,93L94,97L95,95L96,100L97,107L98,114L99,114L100,114L101,114L102,114L103,114L104,107L105,97L106,95L107,96L108,82L109,83L110,87L111,88L112,102L113,104L114,87L115,78L116,77L117,79L118,80L119,77L120,74L121,82L122,72L123,79L124,96L125,105L126,100L127,95L128,100L129,90L130,91L131,90L132,97L133,95L134,98L135,96L136,103L137,109L138,103L139,100L140,97L141,98L142,92L143,88L144,88L145,87L146,87L147,85L148,93L149,94L150,93L151,96L152,104L153,106L154,105L155,98L156,92L157,97L158,91L159,94L160,94L161,89L162,93L163,98L164,104L165,103L166,93L167,85L168,77L169,66L170,68L171,67L172,79L173,74L174,79L175,92L176,89L177,102L178,98L179,87L180,89L181,94L182,88L183,88L184,99L185,102L186,105L187,103L188,101L189,93L190,101L191,92L192,90L193,92L194,94L195,99L196,98L197,99L198,106L199,109L200,114L201,114L202,114L203,114L204,114L205,114L206,114L207,114L208,114L209,105L210,97L211,93L212,88L213,78L214,78L215,80L216,74L217,70L218,65L219,69L220,71L221,84L222,82L223,78L224,86L225,93L226,106L227,114L228,114L229,114L230,108L231,103L232,99L233,96L234,88L235,97L236,94L237,102L238,105L239,114L240,114L241,114L242,107L243,97L244,89L245,92L246,97L247,94L248,107L249,114L250,114L251,114L252,104L253,98L254,99L255,88L256,89L257,91L258,98L259,98L260,104L261,96L262,83L263,79L264,84L265,77L266,80L267,71L268,70L269,64L270,80L271,68L272,73L273,88L274,87L275,91L276,104L277,114L278,114L279,114L280,107L281,101L282,99L283,98L284,91L285,94L286,98L287,97L288,100L289,100L290,107L291,114L292,114L293,114L294,114L295,114L296,109L297,105L298,103L299,100L300,95L301,97L302,99L303,93L304,91L305,96L306,98L307,92L308,97L309,99L310,100L311,102L312,108L313,114L314,114L315,114L316,114L317,114L318,114L319,114L320,106L321,100L322,94L323,93L324,92L325,96L326,93L327,91L328,90L329,97L330,101L331,102L332,107L333,114L334,114L335,114L336,104L337,93L338,94L339,87L340,79L341,80L342,80L343,76L344,78L345,74L346,74L347,78L348,88L349,91L350,93L351,100L352,104L353,114L354,114L355,114L356,107L357,102L358,97L359,100L360,97L361,90L362,91L363,94L364,99L365,97L366,100L367,107L368,114L369,114L370,114L371,114L372,114L373,103L374,90L375,90L376,80L377,82L378,74L379,67L380,74L381,73L382,73L383,81L384,88L385,104L386,114L387,107L388,103L389,101L390,90L391,94L392,87L393,94L394,84L395,84L396,86L397,82L398,93L399,93L400,91L401,98L402,101L403,107L404,114L405,114L406,114L407,114L408,114L409,114L410,114L411,114L412,114L413,114L414,114L415,114L416,114L417,114L418,114L419,114L420,114L421,114L422,114L423,114L424,114L425,114L426,114L427,114L428,114L429,114L430,114L431,114L432,114L433,97L434,84L435,74L436,72L437,77L438,65L439,75L440,79L441,75L442,88L443,104L444,114L445,109L446,104L447,98L448,96L449,98L450,90L451,97L452,91L453,94L454,94L455,98L456,95L457,92L458,96L459,103L460,105L461,106L462,102L463,97L464,89L465,93L466,85L467,90L468,96L469,96L470,93L471,102L472,106L473,114L474,108L475,106L476,102L477,103L478,101L479,93L480,97L481,92L482,96L483,98L484,98L485,101L486,104L487,106L488,108L489,114L490,114L491,114L492,114L493,114L494,104L495,92L496,93L497,84L498,74L499,70L500,69L501,68L502,70L503,70L504,70L505,90L506,86L507,89L508,104L509,114L510,114L511,114L512,114L513,114L514,110L515,104L516,102L517,98L518,100L519,91L520,92L521,99L522,98L523,95L524,97L525,99L526,96L527,100L528,101L529,102L530,102L531,102L532,109L533,114L534,110L535,103L536,102L537,97L538,101L539,96L540,90L541,95L542,91L543,88L544,89L545,94L546,96L547,94L548,100L549,98L550,105L551,107L552,110L553,114L554,108L555,103L556,98L557,98L558,89L559,97L560,96L561,87L562,96L563,93L564,92L565,92L566,96L567,99L568,100L569,99L570,94L571,98L572,94L573,95L574,96L575,96L576,95L577,97L578,99L579,105L580,108L581,114L582,107L583,104L584,98L585,90L586,86L587,90L588,91L589,92L590,84L591,86L592,87L593,87L594,89L595,85L596,96L597,92L598,100L599,103L600,106L601,109L602,107L603,102L604,100L605,95L606,97L607,99L608,96L609,90L610,94L611,97L612,91L613,95L614,100L615,102L616,100L617,102L618,104L619,110L620,114L621,103L622,96L623,92L624,81L625,76L626,67L627,74L628,83L629,76L630,81L631,83L632,86L633,91L634,92L635,81L636,92L637,79L638,81L639,94L640,90L641,91L642,98L643,108L644,114L645,114L646,114L647,114L648,114L649,106L650,105L651,96L652,94L653,99L654,90L655,92L656,94L657,95L658,94L659,99L660,100L661,107L662,114L663,114L664,114L665,114L666,114L667,114L668,114L669,109L670,101L671,100L672,90L673,93L674,86L675,89L676,91L677,88L678,89L679,93L680,100L681,104L682,103L683,102L684,97L685,99L686,101L687,99L688,99L689,100L690,104L691,109L692,114L693,114L694,114L695,114L696,114L697,114L698,114L699,114L700,114L701,109L702,107L703,101L704,99L705,99L706,95L707,100L708,98L709,95L710,94L711,90L712,93L713,96L714,94L715,95L716,94L717,99L718,100L719,101L720,106L721,110L722,114L723,114L724,114L725,114L726,114L727,114L728,114L729,114L730,114L731,114L732,114L733,114L734,114L735,114L736,114L737,114L738,114L739,114L740,114L741,114L742,114L743,114L744,114L745,114L746,114L747,114L748,114L749,114L750,114L751,114L752,114L753,114L754,114L755,114L756,114L757,114L758,114L759,114L760,114L761,114L762,114L763,114L764,114L765,114L766,114L767,114L768,114L769,114L770,114L771,114L772,114L773,114L774,114L775,114L776,114L777,114L778,114L779,114L780,114L781,114L782,114L783,104L784,88L785,84L786,87L787,68L788,70L789,84L790,80L791,80L792,76L793,79L794,89L795,102L796,114L797,114L798,114L799,114L800,114L801,106L802,103L803,97L804,98L805,95L806,89L807,86L808,84L809,85L810,88L811,96L812,91L813,100L814,100L815,107L816,114L817,114L818,114L819,107L820,100L821,97L822,90L823,93L824,87L825,89L826,90L827,88L828,99L829,101L830,99L831,107L832,102L833,95L834,96L835,85L836,85L837,86L838,81L839,87L840,93L841,95L842,96L843,97L844,98L845,93L846,90L847,90L848,95L849,98L850,94L851,100L852,104L853,106L854,102L855,93L856,95L857,94L858,93L859,80L860,84L861,92L862,91L863,97L864,102L865,100L866,100L867,101L868,94L869,95L870,99L871,96L872,100L873,105L874,108L875,114L876,103L877,98L878,90L879,92L880,79L881,73L882,74L883,79L884,67L885,76L886,68L887,68L888,82L889,74L890,82L891,82L892,95L893,98L894,104L895,98L896,95L897,97L898,96L899,94L900,83L901,85L902,91L903,81L904,86L905,91L906,98L907,94L908,98L909,104L910,107L911,103L912,99L913,97L914,88L915,96L916,81L917,84L918,92L919,89L920,93L921,97L922,99L923,101L924,106L925,114L926,107L927,99L928,92L929,90L930,90L931,92L932,88L933,79L934,86L935,80L936,85L937,93L938,79L939,92L940,96L941,95L942,99L943,102L944,106L945,114L946,108L947,104L948,99L949,97L950,99L951,91L952,97L953,90L954,94L955,98L956,98L957,98L958,93L959,100L960,104L961,106L962,106L963,103L964,93L965,93L966,86L967,84L968,80L969,79L970,86L971,92L972,85L973,85L974,93L975,99L976,105L977,110L978,106L979,99L980,99L981,92L982,98L983,90L984,94L985,91L986,97L987,93L988,98L989,98L990,98L991,98L992,103L993,109L994,114L995,114L996,114L997,114L998,114L999,114L1000,114L1001,114L1002,114L1003,114L1004,114L1005,114L1006,114L1007,114L1008,114L1009,114L1010,114L1011,114L1012,114L1013,114L1014,114L1015,114L1016,114L1017,114L1018,114L1019,104L1020,97L1021,89L1022,83L1023,88L1024,86L1025,82L1026,77L1027,68L1028,78L1029,85L1030,72L1031,80L1032,90L1033,90L1034,98L1035,104L1036,114L1037,110L1038,105L1039,103L1040,97L1041,102L1042,96L1043,98L1044,98L1045,90L1046,97L1047,91L1048,95L1049,98L1050,90L1051,93L1052,99L1053,95L1054,102L1055,99L1056,105L1057,109L1058,114L1059,109L1060,97L1061,96L1062,91L1063,91L1064,86L1065,94L1066,81L1067,88L1068,84L1069,94L1070,88L1071,97L1072,99L1073,106L1074,114L1075,114L1076,114L1077,108L1078,98L1079,97L1080,91L1081,93L1082,91L1083,88L1084,88L1085,87L1086,96L1087,97L1088,100L1089,107L1090,103L1091,97L1092,101L1093,94L1094,89L1095,94L1096,92L1097,85L1098,91L1099,88L1100,87L1101,89L1102,92L1103,97L1104,97L1105,99L1106,102L1107,110L1108,114L1109,104L1110,90L1111,83L1112,74L1113,80L1114,70L1115,67L1116,69L1117,79L1118,82L1119,79L1120,93L1121,103L1122,103L1123,94L1124,96L1125,95L1126,97L1127,87L1128,87L1129,89L1130,90L1131,98L1132,101L1133,107L1133,116L1132,122L1131,126L1130,127L1129,136L1128,137L1127,133L1126,132L1125,136L1124,128L1123,127L1122,120L1121,116L1120,123L1119,129L1118,129L1117,128L1116,138L1115,137L1114,131L1113,136L1112,133L1111,123L1110,120L1109,117L1108,114L1107,116L1106,119L1105,119L1104,120L1103,124L1102,124L1101,129L1100,130L1099,132L1098,132L1097,129L1096,129L1095,125L1094,124L1093,122L1092,121L1091,120L1090,118L1089,115L1088,118L1087,124L1086,124L1085,125L1084,130L1083,129L1082,130L1081,129L1080,125L1079,124L1078,119L1077,116L1076,114L1075,114L1074,114L1073,115L1072,120L1071,122L1070,126L1069,130L1068,130L1067,133L1066,136L1065,133L1064,136L1063,133L1062,129L1061,123L1060,119L1059,117L1058,114L1057,115L1056,118L1055,119L1054,123L1053,125L1052,126L1051,128L1050,132L1049,131L1048,130L1047,127L1046,126L1045,127L1044,132L1043,125L1042,129L1041,125L1040,123L1039,120L1038,118L1037,116L1036,114L1035,116L1034,120L1033,124L1032,128L1031,128L1030,135L1029,131L1028,137L1027,139L1026,138L1025,130L1024,133L1023,130L1022,124L1021,123L1020,119L1019,116L1018,114L1017,114L1016,114L1015,114L1014,114L1013,114L1012,114L1011,114L1010,114L1009,114L1008,114L1007,114L1006,114L1005,114L1004,114L1003,114L1002,114L1001,114L1000,114L999,114L998,114L997,114L996,114L995,114L994,114L993,116L992,118L991,118L990,123L989,121L988,122L987,124L986,128L985,124L984,124L983,127L982,126L981,121L980,122L979,118L978,118L977,115L976,115L975,120L974,122L973,125L972,124L971,132L970,129L969,133L968,127L967,126L966,130L965,124L964,122L963,118L962,116L961,120L960,122L959,129L958,132L957,129L956,131L955,137L954,134L953,134L952,136L951,134L950,132L949,124L948,124L947,121L946,116L945,114L944,116L943,120L942,123L941,126L940,125L939,125L938,133L937,134L936,132L935,129L934,135L933,127L932,130L931,127L930,126L929,122L928,120L927,119L926,115L925,114L924,116L923,120L922,123L921,125L920,124L919,128L918,127L917,131L916,129L915,131L914,126L913,125L912,123L911,118L910,116L909,119L908,120L907,126L906,129L905,128L904,131L903,133L902,133L901,129L900,130L899,129L898,129L897,124L896,120L895,118L894,116L893,120L892,126L891,128L890,133L889,134L888,133L887,133L886,132L885,138L884,137L883,139L882,130L881,130L880,128L879,125L878,124L877,118L876,116L875,114L874,116L873,117L872,120L871,124L870,125L869,125L868,124L867,127L866,122L865,121L864,121L863,120L862,124L861,124L860,124L859,128L858,126L857,128L856,123L855,122L854,119L853,116L852,117L851,118L850,122L849,124L848,126L847,127L846,124L845,122L844,124L843,120L842,120L841,122L840,121L839,127L838,128L837,126L836,127L835,123L834,122L833,122L832,119L831,115L830,120L829,126L828,125L827,125L826,134L825,127L824,131L823,125L822,127L821,122L820,119L819,116L818,114L817,114L816,114L815,116L814,120L813,125L812,124L811,127L810,127L809,130L808,132L807,128L806,132L805,128L804,128L803,125L802,119L801,116L800,114L799,114L798,114L797,114L796,114L795,117L794,122L793,129L792,131L791,131L790,132L789,139L788,138L787,133L786,131L785,127L784,122L783,116L782,114L781,114L780,114L779,114L778,114L777,114L776,114L775,114L774,114L773,114L772,114L771,114L770,114L769,114L768,114L767,114L766,114L765,114L764,114L763,114L762,114L761,114L760,114L759,114L758,114L757,114L756,114L755,114L754,114L753,114L752,114L751,114L750,114L749,114L748,114L747,114L746,114L745,114L744,114L743,114L742,114L741,114L740,114L739,114L738,114L737,114L736,114L735,114L734,114L733,114L732,114L731,114L730,114L729,114L728,114L727,114L726,114L725,114L724,114L723,114L722,114L721,115L720,117L719,122L718,121L717,127L716,126L715,127L714,127L713,131L712,129L711,130L710,129L709,129L708,128L707,126L706,125L705,126L704,124L703,122L702,117L701,116L700,114L699,114L698,114L697,114L696,114L695,114L694,114L693,114L692,114L691,115L690,118L689,122L688,125L687,128L686,130L685,126L684,129L683,129L682,123L681,121L680,121L679,124L678,127L677,129L676,125L675,127L674,127L673,126L672,123L671,123L670,119L669,115L668,114L667,114L666,114L665,114L664,114L663,114L662,114L661,116L660,121L659,124L658,125L657,132L656,128L655,136L654,133L653,130L652,125L651,125L650,119L649,117L648,114L647,114L646,114L645,114L644,114L643,117L642,121L641,126L640,132L639,130L638,132L637,137L636,134L635,140L634,133L633,126L632,128L631,129L630,139L629,135L628,142L627,138L626,135L625,141L624,130L623,132L622,124L621,116L620,114L619,116L618,117L617,119L616,123L615,124L614,128L613,128L612,131L611,126L610,127L609,132L608,125L607,124L606,124L605,127L604,123L603,119L602,118L601,116L600,116L599,119L598,121L597,125L596,124L595,126L594,130L593,130L592,131L591,133L590,131L589,132L588,126L587,125L586,128L585,123L584,119L583,118L582,115L581,114L580,116L579,118L578,125L577,128L576,124L575,131L574,134L573,133L572,133L571,130L570,127L569,130L568,127L567,121L566,124L565,130L564,129L563,129L562,129L561,136L560,132L559,135L558,129L557,130L556,126L555,120L554,116L553,114L552,116L551,119L550,121L549,124L548,123L547,130L546,131L545,126L544,127L543,127L542,133L541,129L540,125L539,130L538,128L537,124L536,121L535,118L534,116L533,114L532,116L531,117L530,121L529,124L528,127L527,129L526,124L525,129L524,131L523,131L522,129L521,131L520,125L519,125L518,127L517,123L516,122L515,119L514,116L513,114L512,114L511,114L510,114L509,114L508,117L507,120L506,128L505,127L504,129L503,135L502,135L501,140L500,139L499,132L498,133L497,128L496,123L495,123L494,117L493,114L492,114L491,114L490,114L489,114L488,116L487,120L486,122L485,126L484,129L483,129L482,127L481,130L480,133L479,132L478,127L477,127L476,120L475,119L474,116L473,114L472,117L471,118L470,125L469,126L468,131L467,131L466,127L465,130L464,125L463,124L462,121L461,117L460,119L459,122L458,124L457,127L456,126L455,130L454,131L453,131L452,125L451,124L450,124L449,126L448,125L447,122L446,118L445,115L444,114L443,117L442,123L441,127L440,130L439,137L438,131L437,130L436,128L435,129L434,123L433,118L432,114L431,114L430,114L429,114L428,114L427,114L426,114L425,114L424,114L423,114L422,114L421,114L420,114L419,114L418,114L417,114L416,114L415,114L414,114L413,114L412,114L411,114L410,114L409,114L408,114L407,114L406,114L405,114L404,114L403,116L402,120L401,124L400,128L399,129L398,129L397,130L396,134L395,132L394,138L393,137L392,131L391,125L390,127L389,122L388,121L387,115L386,114L385,117L384,123L383,125L382,133L381,137L380,133L379,140L378,139L377,131L376,131L375,126L374,123L373,117L372,114L371,114L370,114L369,114L368,114L367,117L366,120L365,123L364,126L363,126L362,129L361,129L360,129L359,128L358,126L357,121L356,116L355,114L354,114L353,114L352,116L351,120L350,128L349,127L348,135L347,137L346,140L345,141L344,136L343,134L342,132L341,141L340,131L339,127L338,125L337,121L336,117L335,114L334,114L333,114L332,116L331,119L330,120L329,123L328,129L327,131L326,131L325,130L324,128L323,123L322,123L321,119L320,116L319,114L318,114L317,114L316,114L315,114L314,114L313,114L312,115L311,117L310,120L309,121L308,121L307,126L306,125L305,125L304,128L303,126L302,125L301,123L300,121L299,121L298,118L297,118L296,116L295,114L294,114L293,114L292,114L291,114L290,116L289,120L288,124L287,127L286,125L285,130L284,130L283,128L282,122L281,120L280,116L279,114L278,114L277,114L276,117L275,121L274,123L273,131L272,131L271,135L270,140L269,139L268,138L267,141L266,137L265,130L264,128L263,127L262,122L261,120L260,118L259,126L258,129L257,128L256,133L255,133L254,132L253,125L252,118L251,114L250,114L249,114L248,117L247,122L246,124L245,129L244,123L243,122L242,116L241,114L240,114L239,114L238,117L237,125L236,129L235,130L234,134L233,128L232,126L231,122L230,117L229,114L228,114L227,114L226,116L225,120L224,123L223,130L222,133L221,136L220,134L219,133L218,141L217,137L216,138L215,136L214,132L213,127L212,125L211,125L210,120L209,116L208,114L207,114L206,114L205,114L204,114L203,114L202,114L201,114L200,114L199,116L198,119L197,123L196,122L195,125L194,125L193,131L192,126L191,127L190,129L189,126L188,122L187,120L186,119L185,116L184,120L183,124L182,127L181,126L180,130L179,124L178,121L177,117L176,122L175,123L174,126L173,130L172,133L171,135L170,134L169,134L168,131L167,129L166,122L165,117L164,121L163,126L162,124L161,130L160,134L159,130L158,129L157,130L156,124L155,125L154,119L153,116L152,118L151,123L150,127L149,130L148,133L147,129L146,135L145,136L144,133L143,134L142,128L141,127L140,127L139,123L138,120L137,116L136,118L135,120L134,122L133,126L132,129L131,129L130,123L129,128L128,122L127,120L126,118L125,116L124,120L123,125L122,133L121,129L120,131L119,139L118,134L117,136L116,132L115,125L114,120L113,116L112,120L111,127L110,127L109,128L108,129L107,127L106,127L105,120L104,117L103,114L102,114L101,114L100,114L99,114L98,114L97,116L96,118L95,119L94,123L93,126L92,127L91,125L90,128L89,125L88,123L87,122L86,119L85,117L84,117L83,119L82,122L81,126L80,132L79,128L78,136L77,136L76,137L75,131L74,132L73,133L72,124L71,123L70,121L69,116L68,114L67,114L66,114L65,114L64,114L63,114L62,116L61,119L60,121L59,124L58,126L57,126L56,128L55,128L54,126L53,130L52,129L51,126L50,128L49,132L48,130L47,127L46,127L45,124L44,119L43,118L42,116L41,114L40,114L39,114L38,120L37,125L36,137L35,138L34,129L33,131L32,119L31,114Z" fill="url(#wg2)" opacity="0.75" filter="url(#bl2)"/><path d="M31,85.8L32,92L33,86L34,98L35,107L36,114L37,114L38,114L39,114L40,114L41,114L42,114L43,109L44,106L45,102L46,102L47,98L48,99L49,98L50,95L51,98L52,98L53,95L54,96L55,97L56,92L57,93L58,98L59,93L60,96L61,96L62,100L63,100L64,100L65,102L66,106L67,110L68,114L69,114L70,114L71,114L72,114L73,114L74,114L75,114L76,114L77,107L78,100L79,100L80,91L81,92L82,89L83,95L84,91L85,91L86,98L87,99L88,93L89,93L90,100L91,89L92,91L93,91L94,90L95,91L96,100L97,102L98,105L99,100L100,97L101,97L102,95L103,100L104,97L105,102L106,107L107,111L108,114L109,114L110,114L111,114L112,114L113,114L114,114L115,114L116,114L117,114L118,114L119,109L120,96L121,90L122,76L123,79L124,81L125,72L126,79L127,77L128,94L129,96L130,105L131,103L132,99L133,103L134,102L135,97L136,96L137,100L138,97L139,96L140,97L141,96L142,97L143,101L144,102L145,99L146,105L147,107L148,108L149,111L150,114L151,114L152,114L153,114L154,114L155,114L156,114L157,114L158,114L159,114L160,108L161,103L162,98L163,99L164,92L165,93L166,90L167,82L168,79L169,82L170,76L171,90L172,79L173,82L174,91L175,87L176,93L177,99L178,97L179,89L180,98L181,100L182,101L183,108L184,114L185,114L186,114L187,114L188,114L189,114L190,114L191,114L192,110L193,107L194,103L195,100L196,103L197,103L198,103L199,99L200,99L201,102L202,100L203,101L204,99L205,94L206,93L207,87L208,89L209,75L210,86L211,72L212,68L213,77L214,79L215,79L216,86L217,94L218,98L219,109L220,114L221,114L222,114L223,114L224,114L225,114L226,114L227,109L228,101L229,101L230,93L231,98L232,97L233,99L234,101L235,100L236,107L237,114L238,114L239,114L240,114L241,114L242,114L243,114L244,109L245,101L246,99L247,98L248,101L249,100L250,101L251,99L252,93L253,96L254,98L255,100L256,99L257,95L258,86L259,84L260,80L261,81L262,72L263,76L264,76L265,75L266,72L267,73L268,83L269,84L270,85L271,82L272,97L273,94L274,101L275,100L276,97L277,95L278,97L279,98L280,105L281,107L282,108L283,114L284,114L285,114L286,114L287,114L288,114L289,114L290,114L291,114L292,114L293,114L294,112L295,108L296,104L297,102L298,98L299,98L300,101L301,96L302,93L303,95L304,99L305,97L306,95L307,98L308,97L309,103L310,102L311,105L312,107L313,114L314,114L315,114L316,114L317,109L318,105L319,99L320,96L321,94L322,96L323,99L324,91L325,92L326,98L327,100L328,104L329,106L330,110L331,114L332,111L333,104L334,97L335,86L336,82L337,84L338,83L339,82L340,79L341,81L342,81L343,73L344,86L345,80L346,92L347,87L348,87L349,96L350,104L351,107L352,114L353,114L354,114L355,114L356,114L357,114L358,114L359,114L360,114L361,114L362,114L363,108L364,102L365,104L366,98L367,99L368,90L369,83L370,85L371,75L372,74L373,76L374,68L375,76L376,74L377,75L378,86L379,89L380,98L381,111L382,114L383,114L384,114L385,114L386,114L387,114L388,114L389,111L390,104L391,98L392,97L393,98L394,89L395,98L396,86L397,95L398,84L399,90L400,88L401,97L402,99L403,97L404,100L405,98L406,105L407,110L408,114L409,114L410,114L411,114L412,114L413,114L414,114L415,114L416,114L417,114L418,114L419,114L420,114L421,114L422,114L423,114L424,114L425,114L426,114L427,114L428,114L429,114L430,114L431,114L432,114L433,114L434,114L435,114L436,114L437,107L438,92L439,84L440,84L441,85L442,82L443,84L444,71L445,78L446,86L447,99L448,105L449,100L450,101L451,101L452,101L453,96L454,97L455,91L456,99L457,98L458,97L459,99L460,95L461,95L462,97L463,105L464,111L465,114L466,114L467,114L468,114L469,109L470,105L471,105L472,100L473,98L474,103L475,95L476,101L477,93L478,97L479,95L480,100L481,99L482,102L483,106L484,110L485,114L486,114L487,114L488,114L489,114L490,114L491,114L492,114L493,114L494,110L495,104L496,102L497,94L498,94L499,94L500,91L501,91L502,93L503,88L504,90L505,97L506,100L507,109L508,114L509,114L510,114L511,114L512,111L513,109L514,107L515,106L516,100L517,98L518,99L519,97L520,100L521,99L522,100L523,101L524,102L525,102L526,107L527,107L528,110L529,114L530,114L531,114L532,114L533,114L534,109L535,108L536,101L537,98L538,98L539,102L540,101L541,95L542,92L543,93L544,96L545,99L546,98L547,96L548,103L549,106L550,105L551,107L552,104L553,104L554,100L555,104L556,98L557,99L558,99L559,99L560,102L561,105L562,103L563,103L564,106L565,107L566,106L567,103L568,100L569,99L570,99L571,105L572,103L573,105L574,106L575,106L576,109L577,114L578,114L579,114L580,114L581,114L582,105L583,102L584,95L585,92L586,91L587,87L588,94L589,90L590,92L591,89L592,93L593,96L594,99L595,101L596,108L597,114L598,114L599,114L600,114L601,114L602,112L603,107L604,102L605,101L606,104L607,102L608,102L609,97L610,99L611,97L612,101L613,95L614,99L615,101L616,103L617,102L618,104L619,109L620,114L621,114L622,114L623,114L624,114L625,114L626,108L627,101L628,87L629,80L630,82L631,88L632,73L633,71L634,72L635,79L636,81L637,88L638,99L639,98L640,107L641,114L642,114L643,114L644,114L645,114L646,114L647,114L648,114L649,114L650,114L651,114L652,114L653,114L654,114L655,110L656,104L657,101L658,99L659,97L660,100L661,94L662,99L663,93L664,93L665,97L666,100L667,103L668,103L669,108L670,111L671,114L672,114L673,114L674,114L675,114L676,114L677,108L678,105L679,100L680,97L681,94L682,95L683,95L684,98L685,102L686,103L687,103L688,99L689,104L690,103L691,105L692,110L693,114L694,114L695,114L696,114L697,114L698,114L699,112L700,109L701,106L702,106L703,103L704,102L705,104L706,102L707,100L708,102L709,99L710,102L711,101L712,98L713,102L714,102L715,106L716,104L717,108L718,108L719,111L720,114L721,114L722,114L723,114L724,114L725,114L726,114L727,114L728,114L729,114L730,114L731,114L732,114L733,114L734,114L735,114L736,114L737,114L738,114L739,114L740,114L741,114L742,114L743,114L744,114L745,114L746,114L747,114L748,114L749,114L750,114L751,114L752,114L753,114L754,114L755,114L756,114L757,114L758,114L759,114L760,114L761,114L762,114L763,114L764,114L765,114L766,114L767,114L768,114L769,114L770,114L771,114L772,114L773,114L774,114L775,114L776,114L777,114L778,114L779,114L780,114L781,114L782,114L783,114L784,114L785,114L786,114L787,114L788,114L789,114L790,114L791,101L792,94L793,83L794,86L795,70L796,72L797,71L798,81L799,78L800,87L801,86L802,100L803,110L804,105L805,95L806,96L807,88L808,87L809,94L810,83L811,86L812,96L813,92L814,94L815,102L816,107L817,114L818,107L819,100L820,97L821,95L822,89L823,87L824,94L825,95L826,88L827,94L828,98L829,102L830,97L831,97L832,101L833,98L834,94L835,96L836,101L837,97L838,104L839,103L840,111L841,104L842,99L843,98L844,93L845,95L846,98L847,92L848,93L849,94L850,96L851,95L852,93L853,93L854,98L855,101L856,104L857,109L858,114L859,114L860,114L861,114L862,114L863,114L864,114L865,114L866,114L867,112L868,109L869,104L870,101L871,104L872,99L873,100L874,101L875,101L876,103L877,107L878,110L879,114L880,114L881,114L882,114L883,114L884,114L885,102L886,100L887,96L888,88L889,80L890,83L891,75L892,76L893,75L894,84L895,73L896,90L897,78L898,91L899,91L900,97L901,89L902,91L903,95L904,87L905,89L906,87L907,89L908,95L909,96L910,102L911,100L912,106L913,111L914,114L915,106L916,101L917,100L918,93L919,90L920,89L921,92L922,88L923,88L924,95L925,100L926,96L927,90L928,98L929,98L930,92L931,90L932,86L933,92L934,89L935,96L936,98L937,95L938,98L939,99L940,105L941,109L942,114L943,114L944,114L945,114L946,114L947,114L948,114L949,114L950,109L951,107L952,104L953,102L954,105L955,101L956,101L957,98L958,104L959,101L960,101L961,104L962,95L963,90L964,88L965,92L966,84L967,90L968,83L969,86L970,93L971,93L972,87L973,89L974,91L975,95L976,94L977,100L978,96L979,94L980,95L981,95L982,97L983,104L984,106L985,105L986,109L987,114L988,114L989,114L990,114L991,114L992,114L993,114L994,114L995,114L996,114L997,114L998,114L999,114L1000,114L1001,114L1002,114L1003,114L1004,114L1005,114L1006,114L1007,114L1008,114L1009,114L1010,114L1011,114L1012,114L1013,114L1014,114L1015,114L1016,114L1017,114L1018,114L1019,114L1020,114L1021,114L1022,106L1023,99L1024,94L1025,88L1026,90L1027,79L1028,80L1029,82L1030,89L1031,86L1032,87L1033,81L1034,82L1035,84L1036,88L1037,95L1038,102L1039,101L1040,98L1041,93L1042,90L1043,96L1044,90L1045,97L1046,97L1047,95L1048,95L1049,97L1050,100L1051,100L1052,104L1053,101L1054,108L1055,108L1056,104L1057,104L1058,99L1059,101L1060,95L1061,98L1062,99L1063,96L1064,96L1065,98L1066,97L1067,103L1068,100L1069,105L1070,106L1071,111L1072,114L1073,114L1074,114L1075,114L1076,114L1077,114L1078,114L1079,114L1080,111L1081,105L1082,101L1083,101L1084,95L1085,99L1086,95L1087,98L1088,94L1089,98L1090,103L1091,104L1092,109L1093,114L1094,114L1095,114L1096,114L1097,108L1098,105L1099,102L1100,97L1101,102L1102,97L1103,97L1104,100L1105,98L1106,100L1107,94L1108,93L1109,101L1110,98L1111,94L1112,97L1113,82L1114,91L1115,79L1116,94L1117,92L1118,94L1119,93L1120,104L1121,111L1122,114L1123,114L1124,114L1125,114L1126,114L1127,109L1128,104L1129,103L1130,100L1131,101L1132,101L1133,102L1133,130L1132,130L1131,136L1130,131L1129,124L1128,124L1127,117L1126,114L1125,114L1124,114L1123,114L1122,114L1121,116L1120,119L1119,122L1118,126L1117,128L1116,133L1115,132L1114,135L1113,132L1112,129L1111,124L1110,119L1109,123L1108,124L1107,124L1106,129L1105,127L1104,125L1103,124L1102,124L1101,126L1100,123L1099,120L1098,119L1097,116L1096,114L1095,114L1094,114L1093,114L1092,116L1091,118L1090,121L1089,124L1088,127L1087,124L1086,125L1085,127L1084,126L1083,122L1082,122L1081,117L1080,115L1079,114L1078,114L1077,114L1076,114L1075,114L1074,114L1073,114L1072,114L1071,115L1070,118L1069,124L1068,123L1067,127L1066,130L1065,129L1064,133L1063,128L1062,136L1061,135L1060,131L1059,132L1058,123L1057,124L1056,122L1055,117L1054,116L1053,118L1052,121L1051,123L1050,123L1049,122L1048,124L1047,128L1046,128L1045,127L1044,128L1043,123L1042,127L1041,126L1040,123L1039,120L1038,121L1037,124L1036,123L1035,126L1034,128L1033,136L1032,131L1031,131L1030,132L1029,136L1028,128L1027,129L1026,129L1025,124L1024,123L1023,119L1022,116L1021,114L1020,114L1019,114L1018,114L1017,114L1016,114L1015,114L1014,114L1013,114L1012,114L1011,114L1010,114L1009,114L1008,114L1007,114L1006,114L1005,114L1004,114L1003,114L1002,114L1001,114L1000,114L999,114L998,114L997,114L996,114L995,114L994,114L993,114L992,114L991,114L990,114L989,114L988,114L987,114L986,116L985,117L984,118L983,119L982,120L981,123L980,124L979,124L978,126L977,126L976,124L975,126L974,123L973,122L972,127L971,128L970,127L969,131L968,126L967,126L966,127L965,124L964,123L963,126L962,128L961,126L960,131L959,130L958,128L957,127L956,129L955,127L954,123L953,124L952,123L951,119L950,116L949,114L948,114L947,114L946,114L945,114L944,114L943,114L942,114L941,116L940,117L939,119L938,123L937,124L936,128L935,125L934,128L933,130L932,129L931,127L930,128L929,130L928,125L927,125L926,125L925,121L924,123L923,127L922,127L921,123L920,128L919,122L918,124L917,119L916,118L915,116L914,114L913,116L912,116L911,118L910,119L909,122L908,122L907,124L906,125L905,127L904,126L903,123L902,127L901,122L900,124L899,125L898,123L897,126L896,128L895,127L894,136L893,131L892,130L891,131L890,126L889,126L888,127L887,125L886,119L885,118L884,114L883,114L882,114L881,114L880,114L879,114L878,116L877,118L876,120L875,121L874,123L873,122L872,122L871,121L870,120L869,119L868,117L867,116L866,114L865,114L864,114L863,114L862,114L861,114L860,114L859,114L858,114L857,116L856,118L855,120L854,124L853,128L852,127L851,127L850,127L849,127L848,126L847,123L846,122L845,126L844,122L843,122L842,120L841,117L840,116L839,117L838,120L837,120L836,122L835,126L834,125L833,122L832,122L831,122L830,122L829,119L828,119L827,121L826,127L825,129L824,128L823,128L822,130L821,123L820,122L819,120L818,115L817,114L816,115L815,120L814,121L813,125L812,129L811,130L810,129L809,131L808,130L807,129L806,124L805,120L804,118L803,116L802,117L801,123L800,130L799,133L798,130L797,134L796,138L795,135L794,129L793,125L792,122L791,118L790,114L789,114L788,114L787,114L786,114L785,114L784,114L783,114L782,114L781,114L780,114L779,114L778,114L777,114L776,114L775,114L774,114L773,114L772,114L771,114L770,114L769,114L768,114L767,114L766,114L765,114L764,114L763,114L762,114L761,114L760,114L759,114L758,114L757,114L756,114L755,114L754,114L753,114L752,114L751,114L750,114L749,114L748,114L747,114L746,114L745,114L744,114L743,114L742,114L741,114L740,114L739,114L738,114L737,114L736,114L735,114L734,114L733,114L732,114L731,114L730,114L729,114L728,114L727,114L726,114L725,114L724,114L723,114L722,114L721,114L720,114L719,115L718,116L717,118L716,122L715,121L714,123L713,127L712,126L711,124L710,127L709,125L708,125L707,123L706,126L705,125L704,123L703,123L702,122L701,119L700,116L699,115L698,114L697,114L696,114L695,114L694,114L693,114L692,116L691,119L690,120L689,122L688,129L687,128L686,124L685,127L684,126L683,126L682,125L681,128L680,124L679,124L678,119L677,116L676,114L675,114L674,114L673,114L672,114L671,114L670,116L669,118L668,121L667,121L666,124L665,123L664,128L663,126L662,126L661,131L660,130L659,128L658,125L657,120L656,117L655,115L654,114L653,114L652,114L651,114L650,114L649,114L648,114L647,114L646,114L645,114L644,114L643,114L642,114L641,114L640,116L639,123L638,126L637,132L636,137L635,130L634,130L633,137L632,134L631,136L630,129L629,128L628,129L627,122L626,116L625,114L624,114L623,114L622,114L621,114L620,114L619,115L618,119L617,119L616,122L615,126L614,124L613,131L612,126L611,125L610,129L609,126L608,125L607,126L606,127L605,124L604,120L603,116L602,116L601,114L600,114L599,114L598,114L597,114L596,116L595,117L594,122L593,124L592,126L591,125L590,122L589,127L588,123L587,126L586,122L585,124L584,122L583,117L582,116L581,114L580,114L579,114L578,114L577,114L576,117L575,120L574,124L573,125L572,125L571,132L570,133L569,132L568,133L567,132L566,128L565,125L564,120L563,122L562,125L561,128L560,129L559,131L558,133L557,132L556,127L555,129L554,129L553,126L552,127L551,121L550,121L549,120L548,120L547,126L546,127L545,124L544,130L543,131L542,128L541,126L540,125L539,126L538,123L537,123L536,121L535,117L534,116L533,114L532,114L531,114L530,114L529,114L528,115L527,117L526,120L525,119L524,124L523,123L522,126L521,122L520,124L519,125L518,126L517,123L516,120L515,119L514,118L513,116L512,116L511,114L510,114L509,114L508,114L507,115L506,119L505,120L504,127L503,124L502,132L501,129L500,127L499,126L498,124L497,127L496,122L495,119L494,116L493,114L492,114L491,114L490,114L489,114L488,114L487,114L486,114L485,114L484,116L483,117L482,121L481,123L480,123L479,126L478,127L477,128L476,126L475,127L474,124L473,122L472,123L471,121L470,117L469,116L468,114L467,114L466,114L465,114L464,116L463,119L462,124L461,128L460,128L459,127L458,125L457,124L456,125L455,130L454,127L453,128L452,124L451,126L450,124L449,123L448,120L447,119L446,125L445,129L444,129L443,133L442,132L441,126L440,128L439,125L438,121L437,115L436,114L435,114L434,114L433,114L432,114L431,114L430,114L429,114L428,114L427,114L426,114L425,114L424,114L423,114L422,114L421,114L420,114L419,114L418,114L417,114L416,114L415,114L414,114L413,114L412,114L411,114L410,114L409,114L408,114L407,115L406,118L405,120L404,123L403,123L402,129L401,126L400,127L399,127L398,130L397,130L396,128L395,126L394,128L393,123L392,121L391,121L390,116L389,116L388,114L387,114L386,114L385,114L384,114L383,114L382,114L381,116L380,119L379,123L378,123L377,125L376,129L375,135L374,130L373,135L372,131L371,129L370,127L369,126L368,124L367,128L366,126L365,124L364,119L363,117L362,114L361,114L360,114L359,114L358,114L357,114L356,114L355,114L354,114L353,114L352,114L351,115L350,119L349,124L348,129L347,133L346,127L345,135L344,131L343,135L342,136L341,131L340,132L339,140L338,130L337,131L336,129L335,126L334,124L333,119L332,116L331,114L330,116L329,118L328,123L327,123L326,125L325,130L324,130L323,129L322,126L321,124L320,124L319,121L318,119L317,116L316,114L315,114L314,114L313,114L312,116L311,118L310,120L309,121L308,121L307,121L306,125L305,127L304,123L303,124L302,124L301,122L300,125L299,121L298,123L297,120L296,118L295,117L294,115L293,114L292,114L291,114L290,114L289,114L288,114L287,114L286,114L285,114L284,114L283,114L282,117L281,120L280,125L279,127L278,128L277,124L276,128L275,123L274,120L273,120L272,124L271,125L270,131L269,129L268,129L267,133L266,129L265,138L264,134L263,136L262,133L261,127L260,131L259,127L258,126L257,120L256,120L255,125L254,133L253,128L252,130L251,129L250,124L249,123L248,128L247,123L246,123L245,121L244,116L243,114L242,114L241,114L240,114L239,114L238,114L237,114L236,118L235,123L234,128L233,125L232,126L231,132L230,127L229,125L228,120L227,116L226,114L225,114L224,114L223,114L222,114L221,114L220,114L219,115L218,119L217,125L216,126L215,129L214,128L213,137L212,136L211,136L210,139L209,132L208,134L207,133L206,128L205,124L204,122L203,122L202,122L201,123L200,123L199,123L198,126L197,126L196,123L195,123L194,118L193,117L192,116L191,114L190,114L189,114L188,114L187,114L186,114L185,114L184,114L183,116L182,123L181,127L180,127L179,126L178,124L177,124L176,122L175,126L174,123L173,127L172,130L171,131L170,127L169,132L168,126L167,126L166,125L165,129L164,128L163,125L162,119L161,119L160,116L159,114L158,114L157,114L156,114L155,114L154,114L153,114L152,114L151,114L150,114L149,115L148,116L147,119L146,120L145,121L144,126L143,127L142,128L141,126L140,126L139,132L138,127L137,127L136,129L135,126L134,122L133,127L132,123L131,123L130,123L129,119L128,127L127,129L126,130L125,135L124,137L123,130L122,132L121,128L120,122L119,116L118,114L117,114L116,114L115,114L114,114L113,114L112,114L111,114L110,114L109,114L108,114L107,115L106,119L105,120L104,124L103,124L102,128L101,124L100,126L99,126L98,123L97,121L96,120L95,122L94,122L93,124L92,122L91,122L90,121L89,126L88,124L87,131L86,130L85,129L84,133L83,126L82,127L81,126L80,124L79,123L78,118L77,116L76,114L75,114L74,114L73,114L72,114L71,114L70,114L69,114L68,114L67,116L66,116L65,118L64,120L63,120L62,123L61,124L60,124L59,122L58,122L57,124L56,123L55,127L54,128L53,125L52,123L51,126L50,123L49,122L48,123L47,122L46,120L45,118L44,117L43,115L42,114L41,114L40,114L39,114L38,114L37,114L36,114L35,115L34,125L33,132L32,128L31,130Z" fill="url(#wg2)" opacity="0.4" filter="url(#bl2)"/><rect x="31" y="73" width="1103" height="23" fill="#4a4a4e" opacity="0.28"/><rect x="31" y="72.5" width="1103" height="1" fill="#262628" opacity="0.6"/><rect x="31" y="96" width="1103" height="1" fill="#2a2a2c" opacity="0.25"/><g opacity="0.75"><rect x="41.1" y="45" width="1.3" height="4.299999999999997" fill="#bdbdbd"/><rect x="107.4" y="46" width="1" height="2.799999999999997" fill="#8a8a8a"/><rect x="173.6" y="46" width="1" height="2.799999999999997" fill="#8a8a8a"/><rect x="239.7" y="46" width="1" height="2.799999999999997" fill="#8a8a8a"/><rect x="305.9" y="46" width="1" height="2.799999999999997" fill="#8a8a8a"/><rect x="372.0" y="45" width="1.3" height="4.299999999999997" fill="#bdbdbd"/><rect x="438.3" y="46" width="1" height="2.799999999999997" fill="#8a8a8a"/><rect x="504.5" y="46" width="1" height="2.799999999999997" fill="#8a8a8a"/><rect x="570.6" y="46" width="1" height="2.799999999999997" fill="#8a8a8a"/><rect x="636.8" y="46" width="1" height="2.799999999999997" fill="#8a8a8a"/><rect x="702.9" y="45" width="1.3" height="4.299999999999997" fill="#bdbdbd"/><rect x="769.2" y="46" width="1" height="2.799999999999997" fill="#8a8a8a"/><rect x="835.4" y="46" width="1" height="2.799999999999997" fill="#8a8a8a"/><rect x="901.5" y="46" width="1" height="2.799999999999997" fill="#8a8a8a"/><rect x="967.7" y="46" width="1" height="2.799999999999997" fill="#8a8a8a"/><rect x="1033.8" y="45" width="1.3" height="4.299999999999997" fill="#bdbdbd"/><rect x="1100.1" y="46" width="1" height="2.799999999999997" fill="#8a8a8a"/></g><g opacity="0.75"><rect x="80.8" y="45" width="1.3" height="4.299999999999997" fill="#bdbdbd"/><rect x="147.1" y="46" width="1" height="2.799999999999997" fill="#8a8a8a"/><rect x="213.3" y="46" width="1" height="2.799999999999997" fill="#8a8a8a"/><rect x="279.4" y="46" width="1" height="2.799999999999997" fill="#8a8a8a"/><rect x="345.6" y="46" width="1" height="2.799999999999997" fill="#8a8a8a"/><rect x="411.7" y="45" width="1.3" height="4.299999999999997" fill="#bdbdbd"/><rect x="478.0" y="46" width="1" height="2.799999999999997" fill="#8a8a8a"/><rect x="544.2" y="46" width="1" height="2.799999999999997" fill="#8a8a8a"/><rect x="610.3" y="46" width="1" height="2.799999999999997" fill="#8a8a8a"/><rect x="676.5" y="46" width="1" height="2.799999999999997" fill="#8a8a8a"/><rect x="742.6" y="45" width="1.3" height="4.299999999999997" fill="#bdbdbd"/><rect x="808.9" y="46" width="1" height="2.799999999999997" fill="#8a8a8a"/><rect x="875.1" y="46" width="1" height="2.799999999999997" fill="#8a8a8a"/><rect x="941.2" y="46" width="1" height="2.799999999999997" fill="#8a8a8a"/><rect x="1007.4" y="46" width="1" height="2.799999999999997" fill="#8a8a8a"/><rect x="1073.5" y="45" width="1.3" height="4.299999999999997" fill="#bdbdbd"/></g><rect x="31" y="181" width="321" height="10.5" fill="#2b433d"/><rect x="352" y="178.5" width="229" height="13" fill="#38383a" stroke="#4a4a4c" stroke-width="1"/><rect x="352.5" y="180" width="187.5" height="11" fill="#3a4744"/><rect x="353.5" y="179.5" width="1.2" height="11" fill="#c84a2a"/><rect x="539.5" y="179.5" width="1.3" height="11" fill="#c84a2a"/><rect x="463.5" y="178.5" width="1.2" height="13" fill="#777"/><rect x="467.5" y="178.5" width="1.2" height="13" fill="#777"/><rect x="1097.5" y="178" width="36.5" height="14" fill="#672b2b"/></g><rect x="30.4" y="26.3" width="1103.6" height="166.4" fill="none" stroke="#d9801f" stroke-width="1.3"/><rect x="31" y="25.8" width="1103" height="1.3" fill="#d0521b"/><g opacity="0.45"><rect x="67.4" y="49" width="1.4" height="129" fill="#e0452a"/><path d="M63.5 27.5 H72.5 V44 L68 49 L63.5 44 Z" fill="url(#phg2)"/></g><g opacity="1"><rect x="745.4" y="49" width="1.4" height="129" fill="#e0452a"/><path d="M741.5 27.5 H750.5 V44 L746 49 L741.5 44 Z" fill="url(#phg2)"/></g><circle cx="1147" cy="36" r="8" fill="#48484a"/><path d="M1147 36 V28 A8 8 0 0 1 1154.73 33.93 Z" fill="#3b7b8e"/><circle cx="1147" cy="56" r="8" fill="#48484a"/><path d="M1147 56 V48 A8 8 0 0 1 1155.00 56.00 Z" fill="#3b7b8e"/><circle cx="1147" cy="75.5" r="8" fill="#48484a"/><path d="M1147 75.5 V67.5 A8 8 0 0 1 1151.59 68.95 Z" fill="#3b7b8e"/><path d="M1139.5 90.5 V101.5 H1154.5" fill="none" stroke="#6b6b6d" stroke-width="1.2"/><path d="M1140.5 101 V96 L1144 92 L1147 95 L1150 93 L1153 101 Z" fill="#6b6b6d"/><path d="M1139.5 113 V124 H1154.5" fill="none" stroke="#6b6b6d" stroke-width="1.2"/><path d="M1141 120h1.5v3.5h-1.5z M1144 116h1.5v7.5h-1.5z M1147 118h1.5v5.5h-1.5z M1150 114h1.5v9.5h-1.5z" fill="#6b6b6d"/><path d="M1146 136 L1150 136 L1148 141 L1151 141 L1145.5 148 L1147 142.5 L1144.5 142.5 Z" fill="#6b6b6d"/><rect x="1140.5" y="159" width="12.5" height="9.5" rx="1" fill="none" stroke="#6b6b6d" stroke-width="1.2"/><path d="M1142.5 161.5 H1151 M1142.5 163.8 H1151 M1142.5 166 H1151" stroke="#6b6b6d" stroke-width="1"/><rect x="31" y="74" width="329" height="22" fill="#48484c" opacity="0.5"/><rect x="353" y="74" width="7" height="22" fill="#c38b2c"/><rect x="442" y="74" width="218" height="22" fill="#48484c" opacity="0.5"/><rect x="442" y="74" width="7" height="22" fill="#c38b2c"/><rect x="653" y="74" width="7" height="22" fill="#c99b2c"/><path d="M571 84 L571 98 L574.2 95 L576.6 100 L578.6 99 L576.3 94.2 L580.5 94.2 Z" fill="#111" stroke="#f2f2f2" stroke-width="1"/><rect x="571" y="33" width="91" height="31" rx="5" fill="#141414"/></svg><div class="tc" style="opacity:0.6">00:01:14,555</div><div class="tc" style="opacity:0.6">00:00:40,655</div><div class="rl" style="left:31.5px;opacity:0.7">0:01:00</div><div class="rl" style="left:362.4px;opacity:0.7">0:01:05</div><div class="rl" style="left:693.3px;opacity:0.7">0:01:10</div><div class="rl" style="left:1024.2px;opacity:0.7">0:01:15</div><div class="rl" style="left:71.2px;opacity:0.7">0:00:45</div><div class="rl" style="left:402.1px;opacity:0.7">0:00:50</div><div class="rl" style="left:733.0px;opacity:0.7">0:00:55</div><div class="rl" style="left:1063.9px;opacity:0.7">0:01:00</div><div class="st" style="left:11px;opacity:0.6;clip-path:inset(0 0 0 19px)">对白文字6</div><div class="st" style="left:452px;opacity:0.65">对白文字7</div><div class="tt" style="left:580px;top:39px">对白文字8</div><div class="gl" style="width:198px">按键拍打创建字幕</div><div class="one">1x</div></div><div class="panel" style="top:672px"><svg width="1160" height="195" style="position:absolute;left:0;top:0"><defs><linearGradient id="phg3" x1="0" x2="1" y1="0" y2="0"><stop offset="0" stop-color="#6a6a6a"/><stop offset="0.5" stop-color="#9a9a9a"/><stop offset="1" stop-color="#6a6a6a"/></linearGradient><linearGradient id="wg3" gradientUnits="userSpaceOnUse" x1="0" y1="71.5" x2="0" y2="155.5"><stop offset="0" stop-color="#358f74" stop-opacity="0.25"/><stop offset="0.3" stop-color="#3a9f7f" stop-opacity="0.62"/><stop offset="0.45" stop-color="#41ab88" stop-opacity="0.92"/><stop offset="0.5" stop-color="#4cbc95"/><stop offset="0.55" stop-color="#41ab88" stop-opacity="0.92"/><stop offset="0.7" stop-color="#3a9f7f" stop-opacity="0.62"/><stop offset="1" stop-color="#358f74" stop-opacity="0.25"/></linearGradient><filter id="bl3" x="-1%" y="-10%" width="102%" height="120%"><feGaussianBlur stdDeviation="0.55"/></filter><linearGradient id="rg3" gradientUnits="userSpaceOnUse" x1="0" y1="50" x2="0" y2="178"><stop offset="0" stop-color="#3c9c7e" stop-opacity="0.55"/><stop offset="0.6" stop-color="#40a886" stop-opacity="0.85"/><stop offset="1" stop-color="#45b28e"/></linearGradient><clipPath id="mc3"><rect x="31" y="27" width="1103" height="165"/></clipPath></defs><rect x="766" y="3" width="27" height="20" rx="3" fill="#2a2a2c"/><rect x="916" y="3" width="27" height="20" rx="3" fill="#2a2a2c"/><path d="M256 7 H267.5 V18.5 Z" fill="#6b6b6d"/><path d="M285 9 H297.5 L291.2 19 Z" fill="#6b6b6d"/><path d="M315.5 7 H327 L315.5 18.5 Z" fill="#6b6b6d"/><path d="M347 7.5 H349.5 V18.5 H347 Z M349.5 13 L355.5 7.5 V18.5 Z" fill="#6b6b6d"/><path d="M390 8 L400.5 13.2 L390 18.5 Z" fill="#6b6b6d"/><path d="M434 7.5 L440 13 L434 18.5 Z M440 7.5 H442.5 V18.5 H440 Z" fill="#6b6b6d"/><path d="M462 9.5 h3 l1.5 -2 h5 l1.5 2 h3 a1.5 1.5 0 0 1 1.5 1.5 v6.5 a1.5 1.5 0 0 1 -1.5 1.5 h-13 a1.5 1.5 0 0 1 -1.5 -1.5 v-6.5 a1.5 1.5 0 0 1 1.5 -1.5 Z" fill="#6b6b6d"/><circle cx="469" cy="14" r="2.6" fill="none" stroke="#3c3b3d" stroke-width="1.3"/><path d="M493.5 7 H503 V18.5 L498.2 15 L493.5 18.5 Z" fill="#6b6b6d"/><path d="M523 18 L532 9 L534 11 L525 20 Z" fill="#6b6b6d"/><path d="M527 7 l1 0 M530 6 l0 1.5 M533 7 l1 1 M535 9 l0 1" stroke="#6b6b6d" stroke-width="1"/><rect x="697" y="4.5" width="66" height="16" rx="2.5" fill="#3e3e40" stroke="#58585a" stroke-width="1"/><line x1="743.5" y1="5" x2="743.5" y2="20" stroke="#58585a" stroke-width="1"/><path d="M749.5 11 H756 L752.8 14.5 Z" fill="#c8c8c8"/><path d="M775 6 L784 14 L780 14.5 L782 19 L780 20 L778 15.5 L775 18 Z" fill="#6b6b6d"/><path d="M803 8.5 H809 M803 8.5 V18 H813 V13" fill="none" stroke="#6b6b6d" stroke-width="1.6"/><path d="M807 15 L808 12 L814 6 L816 8 L810 14 Z" fill="#6b6b6d"/><circle cx="835" cy="10" r="2.2" fill="none" stroke="#6b6b6d" stroke-width="1.3"/><circle cx="835" cy="17" r="2.2" fill="none" stroke="#6b6b6d" stroke-width="1.3"/><path d="M837 11 L846 17 M837 16 L846 9" stroke="#6b6b6d" stroke-width="1.3"/><rect x="864.5" y="6.3" width="6" height="6" rx="2" transform="rotate(45 867.5 9.3)" fill="none" stroke="#6b6b6d" stroke-width="1.7"/><rect x="869.5" y="12.3" width="6" height="6" rx="2" transform="rotate(45 872.5 15.3)" fill="none" stroke="#6b6b6d" stroke-width="1.7"/><path d="M893 11 H904 M901 8 L905 11 L901 13.5 M906 16 H895 M898 13.5 L894 16 L898 18.5" fill="none" stroke="#6b6b6d" stroke-width="1.8"/><path d="M923.5 8 V13 a6 6 0 0 0 12 0 V8 h-3.5 V13 a2.5 2.5 0 0 1 -5 0 V8 Z" fill="#6b6b6d"/><circle cx="86" cy="13.5" r="5.3" fill="#3c9a3c"/><rect x="2.5" y="25" width="28" height="168" fill="#2e2e30"/><rect x="2.5" y="25" width="28" height="24" fill="#2a2a2c"/><rect x="2.5" y="49" width="28" height="1.2" fill="#1f1f21"/><rect x="2.5" y="73" width="28" height="23" fill="#353537"/><rect x="2.5" y="178" width="28" height="15" fill="#2a2a2c"/><path d="M11 38.3 H21.5 M16.3 33 V43.5" stroke="#4b4b4d" stroke-width="2.4"/><path d="M10.0 61 Q16.5 53 23.0 61 Q16.5 69 10.0 61 Z" fill="none" stroke="#6c6c6e" stroke-width="1.3"/><circle cx="16.5" cy="60.7" r="2.8" fill="#6c6c6e"/><path d="M10.0 84.5 Q16.5 76.5 23.0 84.5 Q16.5 92.5 10.0 84.5 Z" fill="none" stroke="#6c6c6e" stroke-width="1.3"/><circle cx="16.5" cy="84.2" r="2.8" fill="#6c6c6e"/><path d="M10.0 108 Q16.5 100 23.0 108 Q16.5 116 10.0 108 Z" fill="none" stroke="#6c6c6e" stroke-width="1.3"/><circle cx="16.5" cy="107.7" r="2.8" fill="#6c6c6e"/><g clip-path="url(#mc3)"><rect x="31" y="27" width="1103" height="22.5" fill="#262628"/><rect x="31" y="49.3" width="1103" height="1" fill="#1d1d1f"/><rect x="31" y="50.3" width="1103" height="128" fill="#303032"/><rect x="31" y="178" width="1103" height="14" fill="#29292b"/><path d="M50.5,177.5V118M51.5,177.5V143M52.5,177.5V92M53.5,177.5V113M54.5,177.5V120M55.5,177.5V111M56.5,177.5V122M57.5,177.5V102M58.5,177.5V87M59.5,177.5V158M60.5,177.5V139M61.5,177.5V98M62.5,177.5V143M63.5,177.5V116M64.5,177.5V149M65.5,177.5V84M66.5,177.5V156M67.5,177.5V133M68.5,177.5V145M69.5,177.5V117M70.5,177.5V108M71.5,177.5V162M72.5,177.5V83M73.5,177.5V173M74.5,177.5V128M75.5,177.5V147M76.5,177.5V168M77.5,177.5V82M78.5,177.5V105M79.5,177.5V60M80.5,177.5V117M81.5,177.5V155M82.5,177.5V92M83.5,177.5V77M84.5,177.5V111M85.5,177.5V66M86.5,177.5V102M87.5,177.5V80M88.5,177.5V130M89.5,177.5V140M90.5,177.5V161M91.5,177.5V108M92.5,177.5V175M93.5,177.5V98M94.5,177.5V171M95.5,177.5V146M123.5,177.5V154M124.5,177.5V132M125.5,177.5V132M126.5,177.5V130M127.5,177.5V166M128.5,177.5V145M129.5,177.5V169M130.5,177.5V167M131.5,177.5V129M132.5,177.5V136M133.5,177.5V169M134.5,177.5V156M135.5,177.5V176M136.5,177.5V154M137.5,177.5V172M138.5,177.5V148M139.5,177.5V130M140.5,177.5V120M141.5,177.5V120M142.5,177.5V143M143.5,177.5V128M144.5,177.5V112M145.5,177.5V149M146.5,177.5V125M147.5,177.5V105M148.5,177.5V139M149.5,177.5V158M150.5,177.5V158M151.5,177.5V157M152.5,177.5V164M153.5,177.5V105M154.5,177.5V164M155.5,177.5V105M156.5,177.5V125M157.5,177.5V131M158.5,177.5V128M159.5,177.5V135M160.5,177.5V150M161.5,177.5V146M162.5,177.5V109M163.5,177.5V136M164.5,177.5V127M165.5,177.5V144M166.5,177.5V147M167.5,177.5V115M168.5,177.5V115M169.5,177.5V145M170.5,177.5V118M171.5,177.5V123M172.5,177.5V155M173.5,177.5V156M174.5,177.5V171M215.5,177.5V126M216.5,177.5V148M217.5,177.5V134M218.5,177.5V97M219.5,177.5V155M220.5,177.5V143M221.5,177.5V120M222.5,177.5V167M223.5,177.5V140M224.5,177.5V113M225.5,177.5V115M226.5,177.5V121M227.5,177.5V105M228.5,177.5V152M229.5,177.5V92M230.5,177.5V138M231.5,177.5V114M232.5,177.5V109M233.5,177.5V123M234.5,177.5V117M235.5,177.5V111M236.5,177.5V103M237.5,177.5V108M238.5,177.5V111M239.5,177.5V129M240.5,177.5V138M241.5,177.5V163M242.5,177.5V166M243.5,177.5V160M244.5,177.5V162M245.5,177.5V172M255.5,177.5V155M256.5,177.5V141M257.5,177.5V149M258.5,177.5V155M259.5,177.5V144M260.5,177.5V119M261.5,177.5V165M262.5,177.5V153M263.5,177.5V156M264.5,177.5V160M265.5,177.5V136M266.5,177.5V160M267.5,177.5V116M268.5,177.5V141M269.5,177.5V126M270.5,177.5V119M271.5,177.5V128M272.5,177.5V127M273.5,177.5V140M274.5,177.5V153M275.5,177.5V141M276.5,177.5V136M277.5,177.5V142M278.5,177.5V166M279.5,177.5V140M280.5,177.5V140M281.5,177.5V167M282.5,177.5V153M283.5,177.5V163M284.5,177.5V156M286.5,177.5V167M287.5,177.5V176M289.5,177.5V172M290.5,177.5V171M291.5,177.5V168M292.5,177.5V170M293.5,177.5V172M294.5,177.5V174M295.5,177.5V176M301.5,177.5V150M302.5,177.5V127M303.5,177.5V168M304.5,177.5V125M305.5,177.5V138M306.5,177.5V107M307.5,177.5V160M308.5,177.5V102M309.5,177.5V155M310.5,177.5V128M311.5,177.5V130M312.5,177.5V122M313.5,177.5V164M314.5,177.5V105M315.5,177.5V83M316.5,177.5V113M317.5,177.5V171M318.5,177.5V174M319.5,177.5V140M320.5,177.5V80M321.5,177.5V75M322.5,177.5V157M323.5,177.5V132M324.5,177.5V134M325.5,177.5V79M326.5,177.5V111M327.5,177.5V87M328.5,177.5V99M329.5,177.5V102M330.5,177.5V103M331.5,177.5V91M332.5,177.5V109M333.5,177.5V145M334.5,177.5V144M335.5,177.5V150M336.5,177.5V144M337.5,177.5V162M338.5,177.5V161M339.5,177.5V161M340.5,177.5V168M341.5,177.5V175M344.5,177.5V175M345.5,177.5V176M346.5,177.5V175M347.5,177.5V176M349.5,177.5V175M350.5,177.5V176M351.5,177.5V175M352.5,177.5V176M354.5,177.5V176M355.5,177.5V175M357.5,177.5V175M358.5,177.5V175M360.5,177.5V175M361.5,177.5V175M362.5,177.5V175M363.5,177.5V176M364.5,177.5V175M365.5,177.5V175M366.5,177.5V175M367.5,177.5V176M368.5,177.5V176M369.5,177.5V176M371.5,177.5V176M372.5,177.5V176M373.5,177.5V176M374.5,177.5V175M375.5,177.5V176M376.5,177.5V175M378.5,177.5V176M379.5,177.5V175M381.5,177.5V176M382.5,177.5V176M383.5,177.5V175M384.5,177.5V176M385.5,177.5V176M388.5,177.5V176M391.5,177.5V176M393.5,177.5V176M394.5,177.5V176M395.5,177.5V176M451.5,177.5V176M452.5,177.5V158M453.5,177.5V147M454.5,177.5V127M455.5,177.5V132M456.5,177.5V119M457.5,177.5V151M458.5,177.5V124M459.5,177.5V107M460.5,177.5V128M461.5,177.5V143M462.5,177.5V114M463.5,177.5V112M464.5,177.5V145M465.5,177.5V133M466.5,177.5V127M467.5,177.5V155M468.5,177.5V158M473.5,177.5V165M474.5,177.5V150M475.5,177.5V166M481.5,177.5V164M482.5,177.5V113M483.5,177.5V110M484.5,177.5V134M485.5,177.5V152M486.5,177.5V102M487.5,177.5V132M488.5,177.5V143M489.5,177.5V114M490.5,177.5V159M491.5,177.5V111M492.5,177.5V147M493.5,177.5V144M494.5,177.5V132M495.5,177.5V163M496.5,177.5V140M497.5,177.5V126M498.5,177.5V162M499.5,177.5V148M500.5,177.5V175M501.5,177.5V146M502.5,177.5V156M503.5,177.5V170M505.5,177.5V172M506.5,177.5V175M507.5,177.5V176M508.5,177.5V174M509.5,177.5V173M510.5,177.5V173M511.5,177.5V173M512.5,177.5V176M513.5,177.5V176M514.5,177.5V175M515.5,177.5V173M516.5,177.5V173M517.5,177.5V174M518.5,177.5V172M519.5,177.5V174M520.5,177.5V176M522.5,177.5V173M523.5,177.5V174M526.5,177.5V148M527.5,177.5V144M528.5,177.5V143M529.5,177.5V163M530.5,177.5V92M531.5,177.5V77M532.5,177.5V86M533.5,177.5V70M534.5,177.5V149M535.5,177.5V87M536.5,177.5V94M537.5,177.5V88M538.5,177.5V101M539.5,177.5V133M540.5,177.5V119M541.5,177.5V136M542.5,177.5V82M543.5,177.5V67M544.5,177.5V132M545.5,177.5V119M546.5,177.5V62M547.5,177.5V113M548.5,177.5V60M549.5,177.5V98M550.5,177.5V120M551.5,177.5V169M552.5,177.5V99M553.5,177.5V149M554.5,177.5V84M555.5,177.5V116M556.5,177.5V94M557.5,177.5V116M558.5,177.5V93M559.5,177.5V129M560.5,177.5V144M561.5,177.5V148M562.5,177.5V130M563.5,177.5V149M564.5,177.5V150M565.5,177.5V164M566.5,177.5V161M567.5,177.5V154M568.5,177.5V161M569.5,177.5V165M570.5,177.5V158M571.5,177.5V158M572.5,177.5V162M573.5,177.5V173M590.5,177.5V176M592.5,177.5V170M593.5,177.5V168M594.5,177.5V167M595.5,177.5V174M596.5,177.5V176M597.5,177.5V163M598.5,177.5V166M599.5,177.5V161M600.5,177.5V172M601.5,177.5V167M602.5,177.5V167M603.5,177.5V164M604.5,177.5V167M605.5,177.5V161M606.5,177.5V164M607.5,177.5V166M608.5,177.5V163M609.5,177.5V169M610.5,177.5V170M611.5,177.5V172M612.5,177.5V162M613.5,177.5V172M614.5,177.5V145M615.5,177.5V165M616.5,177.5V143M617.5,177.5V160M618.5,177.5V168M619.5,177.5V161M620.5,177.5V150M621.5,177.5V148M622.5,177.5V140M623.5,177.5V134M624.5,177.5V168M625.5,177.5V158M626.5,177.5V131M627.5,177.5V136M628.5,177.5V123M629.5,177.5V161M630.5,177.5V111M631.5,177.5V170M632.5,177.5V150M633.5,177.5V97M634.5,177.5V158M635.5,177.5V100M636.5,177.5V94M637.5,177.5V86M638.5,177.5V174M639.5,177.5V77M640.5,177.5V65M641.5,177.5V133M642.5,177.5V166M643.5,177.5V61M644.5,177.5V118M645.5,177.5V134M646.5,177.5V113M647.5,177.5V167M648.5,177.5V60M649.5,177.5V119M650.5,177.5V55M651.5,177.5V77M652.5,177.5V93M653.5,177.5V152M654.5,177.5V147M655.5,177.5V69M656.5,177.5V141M657.5,177.5V159M658.5,177.5V85M659.5,177.5V144M660.5,177.5V148M661.5,177.5V135M662.5,177.5V100M663.5,177.5V121M664.5,177.5V147M665.5,177.5V115M666.5,177.5V141M667.5,177.5V166M668.5,177.5V163M669.5,177.5V160M670.5,177.5V165M671.5,177.5V169M672.5,177.5V175M673.5,177.5V171M674.5,177.5V176M675.5,177.5V176M676.5,177.5V176M687.5,177.5V169M688.5,177.5V173M689.5,177.5V148M690.5,177.5V152M691.5,177.5V134M692.5,177.5V130M693.5,177.5V163M694.5,177.5V116M695.5,177.5V149M696.5,177.5V133M697.5,177.5V111M698.5,177.5V111M699.5,177.5V108M700.5,177.5V150M701.5,177.5V166M702.5,177.5V137M703.5,177.5V138M704.5,177.5V150M705.5,177.5V115M706.5,177.5V109M707.5,177.5V101M708.5,177.5V103M709.5,177.5V93M710.5,177.5V108M711.5,177.5V126M712.5,177.5V135M713.5,177.5V132M714.5,177.5V136M715.5,177.5V155M716.5,177.5V132M717.5,177.5V125M718.5,177.5V123M719.5,177.5V160M720.5,177.5V126M721.5,177.5V132M722.5,177.5V102M723.5,177.5V157M724.5,177.5V151M725.5,177.5V124M726.5,177.5V154M727.5,177.5V143M728.5,177.5V175M729.5,177.5V165M730.5,177.5V146M731.5,177.5V148M732.5,177.5V171M733.5,177.5V173M734.5,177.5V175M736.5,177.5V162M737.5,177.5V163M738.5,177.5V162M739.5,177.5V172M740.5,177.5V165M741.5,177.5V167M742.5,177.5V175M743.5,177.5V176M744.5,177.5V176M745.5,177.5V176M747.5,177.5V158M748.5,177.5V117M749.5,177.5V115M750.5,177.5V102M751.5,177.5V125M752.5,177.5V137M753.5,177.5V173M754.5,177.5V115M755.5,177.5V154M756.5,177.5V154M757.5,177.5V131M758.5,177.5V119M759.5,177.5V132M760.5,177.5V133M761.5,177.5V147M762.5,177.5V152M763.5,177.5V167M764.5,177.5V128M765.5,177.5V156M766.5,177.5V148M767.5,177.5V128M768.5,177.5V138M769.5,177.5V151M770.5,177.5V138M771.5,177.5V152M772.5,177.5V157M773.5,177.5V153M774.5,177.5V169M775.5,177.5V170M776.5,177.5V172M777.5,177.5V166M778.5,177.5V165M779.5,177.5V170M780.5,177.5V173M781.5,177.5V173M782.5,177.5V173M784.5,177.5V173M785.5,177.5V172M786.5,177.5V175M787.5,177.5V176M788.5,177.5V176M790.5,177.5V115M791.5,177.5V144M792.5,177.5V142M793.5,177.5V162M794.5,177.5V144M795.5,177.5V89M796.5,177.5V103M797.5,177.5V171M798.5,177.5V149M799.5,177.5V100M800.5,177.5V142M801.5,177.5V116M802.5,177.5V159M803.5,177.5V152M804.5,177.5V109M805.5,177.5V114M806.5,177.5V157M807.5,177.5V174M808.5,177.5V125M809.5,177.5V134M810.5,177.5V152M811.5,177.5V159M812.5,177.5V157M813.5,177.5V174M814.5,177.5V161M815.5,177.5V160M816.5,177.5V171M817.5,177.5V168M818.5,177.5V167M819.5,177.5V165M820.5,177.5V170M821.5,177.5V172M822.5,177.5V172M823.5,177.5V169M825.5,177.5V176M826.5,177.5V174M827.5,177.5V173M828.5,177.5V175M829.5,177.5V173M830.5,177.5V173M831.5,177.5V175M832.5,177.5V173M834.5,177.5V176M835.5,177.5V161M836.5,177.5V137M837.5,177.5V137M838.5,177.5V151M839.5,177.5V148M840.5,177.5V140M841.5,177.5V150M842.5,177.5V134M843.5,177.5V141M844.5,177.5V140M845.5,177.5V148M846.5,177.5V152M847.5,177.5V152M848.5,177.5V130M849.5,177.5V126M850.5,177.5V167M851.5,177.5V136M852.5,177.5V133M853.5,177.5V138M854.5,177.5V107M855.5,177.5V136M856.5,177.5V148M857.5,177.5V119M858.5,177.5V168M859.5,177.5V131M860.5,177.5V157M861.5,177.5V159M862.5,177.5V154M863.5,177.5V158M864.5,177.5V130M865.5,177.5V148M866.5,177.5V174M867.5,177.5V148M868.5,177.5V165M869.5,177.5V132M870.5,177.5V118M871.5,177.5V132M872.5,177.5V132M873.5,177.5V109M874.5,177.5V107M875.5,177.5V146M876.5,177.5V109M877.5,177.5V111M878.5,177.5V143M879.5,177.5V116M880.5,177.5V153M881.5,177.5V106M882.5,177.5V95M883.5,177.5V109M884.5,177.5V170M885.5,177.5V107M886.5,177.5V94M887.5,177.5V153M888.5,177.5V126M889.5,177.5V123M890.5,177.5V103M891.5,177.5V105M892.5,177.5V87M893.5,177.5V96M894.5,177.5V122M895.5,177.5V97M896.5,177.5V104M897.5,177.5V90M898.5,177.5V108M899.5,177.5V142M900.5,177.5V88M901.5,177.5V121M902.5,177.5V163M903.5,177.5V154M904.5,177.5V164M905.5,177.5V117M906.5,177.5V150M907.5,177.5V116M908.5,177.5V112M909.5,177.5V111M910.5,177.5V166M911.5,177.5V136M912.5,177.5V140M913.5,177.5V166M914.5,177.5V176M915.5,177.5V167M916.5,177.5V164M917.5,177.5V167M918.5,177.5V172M919.5,177.5V173M920.5,177.5V176M922.5,177.5V176M924.5,177.5V176M925.5,177.5V176M927.5,177.5V176M931.5,177.5V176M933.5,177.5V176M935.5,177.5V176M938.5,177.5V176M939.5,177.5V176M941.5,177.5V176M942.5,177.5V176M944.5,177.5V176M945.5,177.5V176M948.5,177.5V176M949.5,177.5V176M951.5,177.5V176M952.5,177.5V176M954.5,177.5V176M956.5,177.5V176M957.5,177.5V176M959.5,177.5V176M961.5,177.5V176M965.5,177.5V176M1017.5,177.5V169M1018.5,177.5V170M1019.5,177.5V166M1020.5,177.5V161M1021.5,177.5V166M1022.5,177.5V150M1023.5,177.5V158M1024.5,177.5V157M1025.5,177.5V172M1026.5,177.5V175M1027.5,177.5V144M1028.5,177.5V159M1029.5,177.5V171M1030.5,177.5V150M1031.5,177.5V146M1032.5,177.5V132M1033.5,177.5V168M1034.5,177.5V99M1035.5,177.5V147M1036.5,177.5V126M1037.5,177.5V105M1038.5,177.5V77M1039.5,177.5V124M1040.5,177.5V161M1041.5,177.5V151M1042.5,177.5V118M1043.5,177.5V134M1044.5,177.5V109M1045.5,177.5V66M1046.5,177.5V54M1047.5,177.5V90M1048.5,177.5V113M1049.5,177.5V137M1050.5,177.5V80M1051.5,177.5V83M1052.5,177.5V142M1053.5,177.5V91M1054.5,177.5V112M1055.5,177.5V100M1056.5,177.5V147M1057.5,177.5V166M1058.5,177.5V120M1059.5,177.5V169M1060.5,177.5V150M1061.5,177.5V154M1062.5,177.5V154M1063.5,177.5V170M1064.5,177.5V171M1071.5,177.5V157M1072.5,177.5V161M1073.5,177.5V161M1074.5,177.5V153M1075.5,177.5V157M1076.5,177.5V170M1077.5,177.5V169M1078.5,177.5V144M1079.5,177.5V156M1080.5,177.5V149M1081.5,177.5V112M1082.5,177.5V137M1083.5,177.5V130M1084.5,177.5V137M1085.5,177.5V152M1086.5,177.5V87M1087.5,177.5V126M1088.5,177.5V92M1089.5,177.5V140M1090.5,177.5V89M1091.5,177.5V89M1092.5,177.5V110M1093.5,177.5V99M1094.5,177.5V76M1095.5,177.5V83M1096.5,177.5V84M1097.5,177.5V137M1098.5,177.5V90M1099.5,177.5V174M1100.5,177.5V124M1101.5,177.5V148M1102.5,177.5V87M1103.5,177.5V141M1104.5,177.5V131M1105.5,177.5V88M1106.5,177.5V136M1107.5,177.5V92M1108.5,177.5V94M1109.5,177.5V100M1110.5,177.5V167M1111.5,177.5V170M1112.5,177.5V121M1113.5,177.5V163M1114.5,177.5V146M1115.5,177.5V141M1116.5,177.5V140M1117.5,177.5V154M1118.5,177.5V169M1119.5,177.5V150M1120.5,177.5V138M1121.5,177.5V162M1122.5,177.5V168M1123.5,177.5V166M1124.5,177.5V169M1125.5,177.5V176M1126.5,177.5V159M1127.5,177.5V167M1128.5,177.5V164M1129.5,177.5V170M1130.5,177.5V167M1132.5,177.5V169M1133.5,177.5V175" stroke="#44ad8a" stroke-width="1" opacity="0.5"/><path d="M50.5,177.5V114M51.5,177.5V112M52.5,177.5V152M53.5,177.5V122M54.5,177.5V127M55.5,177.5V139M56.5,177.5V167M57.5,177.5V127M58.5,177.5V116M59.5,177.5V166M60.5,177.5V147M61.5,177.5V157M62.5,177.5V140M63.5,177.5V137M64.5,177.5V158M65.5,177.5V95M66.5,177.5V152M67.5,177.5V165M68.5,177.5V146M69.5,177.5V115M70.5,177.5V85M71.5,177.5V113M72.5,177.5V156M73.5,177.5V105M74.5,177.5V70M75.5,177.5V108M76.5,177.5V158M77.5,177.5V110M78.5,177.5V133M79.5,177.5V107M80.5,177.5V74M81.5,177.5V143M82.5,177.5V129M83.5,177.5V57M84.5,177.5V72M85.5,177.5V77M86.5,177.5V67M87.5,177.5V136M88.5,177.5V94M89.5,177.5V141M90.5,177.5V68M91.5,177.5V72M92.5,177.5V86M93.5,177.5V104M94.5,177.5V173M95.5,177.5V165M123.5,177.5V135M124.5,177.5V128M125.5,177.5V175M126.5,177.5V141M127.5,177.5V154M128.5,177.5V148M129.5,177.5V161M130.5,177.5V148M131.5,177.5V141M132.5,177.5V158M133.5,177.5V151M134.5,177.5V153M135.5,177.5V144M136.5,177.5V129M137.5,177.5V162M138.5,177.5V165M139.5,177.5V114M140.5,177.5V171M141.5,177.5V136M142.5,177.5V114M143.5,177.5V157M144.5,177.5V139M145.5,177.5V119M146.5,177.5V152M147.5,177.5V114M148.5,177.5V164M149.5,177.5V153M150.5,177.5V140M151.5,177.5V137M152.5,177.5V160M153.5,177.5V105M154.5,177.5V107M155.5,177.5V129M156.5,177.5V111M157.5,177.5V130M158.5,177.5V128M159.5,177.5V105M160.5,177.5V146M161.5,177.5V112M162.5,177.5V113M163.5,177.5V113M164.5,177.5V111M165.5,177.5V163M166.5,177.5V131M167.5,177.5V125M168.5,177.5V146M169.5,177.5V149M170.5,177.5V112M171.5,177.5V169M172.5,177.5V129M173.5,177.5V161M174.5,177.5V175M215.5,177.5V114M216.5,177.5V97M217.5,177.5V142M218.5,177.5V113M219.5,177.5V106M220.5,177.5V144M221.5,177.5V142M222.5,177.5V123M223.5,177.5V99M224.5,177.5V132M225.5,177.5V142M226.5,177.5V151M227.5,177.5V174M228.5,177.5V138M229.5,177.5V141M230.5,177.5V94M231.5,177.5V164M232.5,177.5V97M233.5,177.5V135M234.5,177.5V119M235.5,177.5V98M236.5,177.5V111M237.5,177.5V139M238.5,177.5V110M239.5,177.5V140M240.5,177.5V127M241.5,177.5V141M242.5,177.5V169M243.5,177.5V154M244.5,177.5V176M245.5,177.5V170M255.5,177.5V164M257.5,177.5V132M258.5,177.5V114M259.5,177.5V123M260.5,177.5V134M261.5,177.5V140M262.5,177.5V145M263.5,177.5V164M264.5,177.5V174M265.5,177.5V173M266.5,177.5V140M267.5,177.5V146M268.5,177.5V168M269.5,177.5V127M270.5,177.5V149M271.5,177.5V123M272.5,177.5V152M273.5,177.5V166M274.5,177.5V161M275.5,177.5V156M276.5,177.5V130M277.5,177.5V170M278.5,177.5V145M279.5,177.5V146M280.5,177.5V150M281.5,177.5V142M282.5,177.5V144M283.5,177.5V169M284.5,177.5V157M285.5,177.5V168M286.5,177.5V168M287.5,177.5V173M289.5,177.5V164M290.5,177.5V167M291.5,177.5V174M292.5,177.5V176M293.5,177.5V176M294.5,177.5V176M301.5,177.5V160M302.5,177.5V137M303.5,177.5V141M304.5,177.5V159M305.5,177.5V138M307.5,177.5V108M308.5,177.5V102M309.5,177.5V167M310.5,177.5V104M311.5,177.5V105M312.5,177.5V131M313.5,177.5V124M314.5,177.5V88M315.5,177.5V103M316.5,177.5V131M317.5,177.5V85M318.5,177.5V161M319.5,177.5V87M320.5,177.5V137M321.5,177.5V83M322.5,177.5V163M323.5,177.5V159M324.5,177.5V135M325.5,177.5V151M326.5,177.5V89M327.5,177.5V156M328.5,177.5V132M329.5,177.5V112M330.5,177.5V105M331.5,177.5V91M332.5,177.5V100M333.5,177.5V127M334.5,177.5V127M335.5,177.5V124M336.5,177.5V135M337.5,177.5V162M338.5,177.5V161M339.5,177.5V170M340.5,177.5V162M341.5,177.5V171M343.5,177.5V175M344.5,177.5V176M345.5,177.5V175M346.5,177.5V176M347.5,177.5V176M350.5,177.5V175M353.5,177.5V175M354.5,177.5V176M355.5,177.5V176M356.5,177.5V175M357.5,177.5V175M359.5,177.5V176M360.5,177.5V175M364.5,177.5V175M365.5,177.5V175M366.5,177.5V175M367.5,177.5V176M371.5,177.5V175M372.5,177.5V175M373.5,177.5V176M374.5,177.5V175M375.5,177.5V175M376.5,177.5V176M377.5,177.5V176M378.5,177.5V176M379.5,177.5V176M380.5,177.5V176M381.5,177.5V176M382.5,177.5V176M383.5,177.5V176M384.5,177.5V176M386.5,177.5V176M387.5,177.5V176M388.5,177.5V176M389.5,177.5V176M390.5,177.5V176M391.5,177.5V176M395.5,177.5V176M452.5,177.5V152M453.5,177.5V142M454.5,177.5V133M455.5,177.5V133M456.5,177.5V148M457.5,177.5V143M458.5,177.5V154M459.5,177.5V172M460.5,177.5V135M461.5,177.5V161M462.5,177.5V123M463.5,177.5V100M464.5,177.5V142M465.5,177.5V158M466.5,177.5V135M467.5,177.5V149M468.5,177.5V161M473.5,177.5V163M474.5,177.5V152M475.5,177.5V175M481.5,177.5V163M482.5,177.5V133M483.5,177.5V103M484.5,177.5V79M485.5,177.5V153M486.5,177.5V140M487.5,177.5V126M488.5,177.5V136M489.5,177.5V152M490.5,177.5V105M491.5,177.5V155M492.5,177.5V148M493.5,177.5V143M494.5,177.5V128M495.5,177.5V172M496.5,177.5V134M497.5,177.5V162M498.5,177.5V170M499.5,177.5V132M500.5,177.5V163M501.5,177.5V171M502.5,177.5V158M503.5,177.5V169M505.5,177.5V173M507.5,177.5V174M508.5,177.5V173M509.5,177.5V176M510.5,177.5V174M512.5,177.5V173M513.5,177.5V172M514.5,177.5V173M516.5,177.5V174M517.5,177.5V174M519.5,177.5V174M520.5,177.5V174M521.5,177.5V175M522.5,177.5V174M523.5,177.5V175M524.5,177.5V175M526.5,177.5V148M527.5,177.5V150M528.5,177.5V130M529.5,177.5V95M530.5,177.5V173M531.5,177.5V133M532.5,177.5V161M533.5,177.5V108M534.5,177.5V70M535.5,177.5V93M536.5,177.5V105M537.5,177.5V139M538.5,177.5V102M539.5,177.5V66M540.5,177.5V148M541.5,177.5V95M542.5,177.5V130M543.5,177.5V94M544.5,177.5V113M545.5,177.5V63M546.5,177.5V84M547.5,177.5V114M548.5,177.5V91M549.5,177.5V124M550.5,177.5V78M551.5,177.5V96M552.5,177.5V70M553.5,177.5V123M554.5,177.5V120M555.5,177.5V114M556.5,177.5V87M557.5,177.5V125M558.5,177.5V139M559.5,177.5V105M560.5,177.5V125M561.5,177.5V122M562.5,177.5V122M563.5,177.5V149M564.5,177.5V128M565.5,177.5V140M566.5,177.5V157M567.5,177.5V144M568.5,177.5V164M569.5,177.5V158M570.5,177.5V150M571.5,177.5V149M572.5,177.5V168M573.5,177.5V174M590.5,177.5V174M591.5,177.5V173M592.5,177.5V170M593.5,177.5V175M594.5,177.5V171M595.5,177.5V171M596.5,177.5V168M597.5,177.5V169M598.5,177.5V175M599.5,177.5V166M600.5,177.5V173M601.5,177.5V158M602.5,177.5V165M603.5,177.5V167M604.5,177.5V158M605.5,177.5V155M606.5,177.5V155M608.5,177.5V166M609.5,177.5V155M610.5,177.5V154M611.5,177.5V157M612.5,177.5V165M613.5,177.5V146M614.5,177.5V175M615.5,177.5V144M616.5,177.5V161M617.5,177.5V173M618.5,177.5V166M619.5,177.5V140M620.5,177.5V144M621.5,177.5V176M622.5,177.5V158M623.5,177.5V139M624.5,177.5V154M625.5,177.5V131M626.5,177.5V144M627.5,177.5V143M628.5,177.5V135M629.5,177.5V119M630.5,177.5V143M631.5,177.5V147M632.5,177.5V116M633.5,177.5V156M634.5,177.5V99M635.5,177.5V142M636.5,177.5V138M637.5,177.5V135M638.5,177.5V156M639.5,177.5V113M640.5,177.5V131M641.5,177.5V61M642.5,177.5V161M643.5,177.5V136M644.5,177.5V53M645.5,177.5V123M646.5,177.5V107M647.5,177.5V119M648.5,177.5V63M649.5,177.5V61M650.5,177.5V151M651.5,177.5V51M652.5,177.5V68M653.5,177.5V88M654.5,177.5V62M655.5,177.5V70M656.5,177.5V89M657.5,177.5V160M658.5,177.5V86M659.5,177.5V117M660.5,177.5V90M661.5,177.5V148M662.5,177.5V123M663.5,177.5V118M664.5,177.5V137M665.5,177.5V159M666.5,177.5V122M667.5,177.5V128M668.5,177.5V163M669.5,177.5V158M670.5,177.5V164M671.5,177.5V175M672.5,177.5V175M673.5,177.5V173M674.5,177.5V172M675.5,177.5V176M687.5,177.5V164M688.5,177.5V162M689.5,177.5V142M690.5,177.5V139M691.5,177.5V132M692.5,177.5V151M693.5,177.5V154M694.5,177.5V129M695.5,177.5V154M696.5,177.5V120M697.5,177.5V103M698.5,177.5V119M699.5,177.5V163M700.5,177.5V134M701.5,177.5V114M702.5,177.5V96M703.5,177.5V88M704.5,177.5V167M705.5,177.5V134M706.5,177.5V116M707.5,177.5V164M708.5,177.5V99M709.5,177.5V145M710.5,177.5V119M711.5,177.5V104M712.5,177.5V109M713.5,177.5V126M714.5,177.5V131M715.5,177.5V131M716.5,177.5V96M717.5,177.5V125M718.5,177.5V92M719.5,177.5V101M720.5,177.5V151M721.5,177.5V158M722.5,177.5V97M723.5,177.5V100M724.5,177.5V120M725.5,177.5V116M726.5,177.5V133M727.5,177.5V140M728.5,177.5V133M729.5,177.5V171M730.5,177.5V146M731.5,177.5V155M732.5,177.5V163M733.5,177.5V163M734.5,177.5V175M736.5,177.5V171M737.5,177.5V160M738.5,177.5V166M739.5,177.5V172M740.5,177.5V167M741.5,177.5V167M743.5,177.5V172M744.5,177.5V173M745.5,177.5V175M747.5,177.5V156M748.5,177.5V141M749.5,177.5V148M750.5,177.5V114M751.5,177.5V131M752.5,177.5V120M753.5,177.5V153M754.5,177.5V131M755.5,177.5V128M756.5,177.5V119M757.5,177.5V159M758.5,177.5V163M759.5,177.5V142M760.5,177.5V133M761.5,177.5V125M762.5,177.5V135M763.5,177.5V161M764.5,177.5V150M765.5,177.5V170M766.5,177.5V146M767.5,177.5V145M768.5,177.5V167M769.5,177.5V147M770.5,177.5V160M771.5,177.5V147M772.5,177.5V151M773.5,177.5V165M774.5,177.5V160M775.5,177.5V171M776.5,177.5V173M777.5,177.5V166M778.5,177.5V171M779.5,177.5V173M780.5,177.5V173M781.5,177.5V168M782.5,177.5V170M783.5,177.5V171M784.5,177.5V173M785.5,177.5V173M786.5,177.5V176M787.5,177.5V176M788.5,177.5V176M790.5,177.5V122M791.5,177.5V137M792.5,177.5V124M793.5,177.5V107M794.5,177.5V108M795.5,177.5V111M796.5,177.5V148M797.5,177.5V110M798.5,177.5V141M799.5,177.5V130M800.5,177.5V104M801.5,177.5V139M802.5,177.5V108M803.5,177.5V159M804.5,177.5V130M805.5,177.5V151M806.5,177.5V114M807.5,177.5V127M808.5,177.5V154M809.5,177.5V150M810.5,177.5V171M811.5,177.5V176M812.5,177.5V149M814.5,177.5V165M815.5,177.5V158M816.5,177.5V169M817.5,177.5V164M818.5,177.5V163M819.5,177.5V171M820.5,177.5V171M821.5,177.5V168M822.5,177.5V170M823.5,177.5V172M825.5,177.5V173M826.5,177.5V173M827.5,177.5V171M828.5,177.5V175M829.5,177.5V175M830.5,177.5V174M831.5,177.5V175M832.5,177.5V176M833.5,177.5V173M834.5,177.5V173M835.5,177.5V161M836.5,177.5V130M837.5,177.5V124M838.5,177.5V153M839.5,177.5V153M840.5,177.5V142M841.5,177.5V107M842.5,177.5V165M843.5,177.5V134M844.5,177.5V119M845.5,177.5V162M846.5,177.5V119M847.5,177.5V121M848.5,177.5V133M849.5,177.5V99M850.5,177.5V122M851.5,177.5V121M852.5,177.5V148M853.5,177.5V122M854.5,177.5V128M855.5,177.5V124M856.5,177.5V121M857.5,177.5V148M858.5,177.5V154M859.5,177.5V134M860.5,177.5V140M861.5,177.5V164M862.5,177.5V161M863.5,177.5V127M864.5,177.5V141M865.5,177.5V153M866.5,177.5V141M867.5,177.5V119M868.5,177.5V125M869.5,177.5V132M870.5,177.5V120M871.5,177.5V158M872.5,177.5V120M873.5,177.5V110M874.5,177.5V108M875.5,177.5V130M876.5,177.5V159M877.5,177.5V167M878.5,177.5V162M879.5,177.5V97M880.5,177.5V147M881.5,177.5V96M882.5,177.5V105M883.5,177.5V128M884.5,177.5V147M885.5,177.5V174M886.5,177.5V110M887.5,177.5V127M888.5,177.5V169M889.5,177.5V106M890.5,177.5V121M891.5,177.5V85M892.5,177.5V99M893.5,177.5V150M894.5,177.5V85M895.5,177.5V126M896.5,177.5V114M897.5,177.5V166M898.5,177.5V107M899.5,177.5V137M900.5,177.5V89M901.5,177.5V155M902.5,177.5V114M903.5,177.5V130M904.5,177.5V89M905.5,177.5V88M906.5,177.5V102M907.5,177.5V107M908.5,177.5V150M909.5,177.5V152M910.5,177.5V145M911.5,177.5V158M912.5,177.5V136M913.5,177.5V164M914.5,177.5V165M915.5,177.5V167M916.5,177.5V173M917.5,177.5V174M918.5,177.5V171M920.5,177.5V176M924.5,177.5V176M926.5,177.5V176M927.5,177.5V176M928.5,177.5V176M929.5,177.5V176M930.5,177.5V176M931.5,177.5V176M934.5,177.5V176M935.5,177.5V176M937.5,177.5V176M938.5,177.5V176M939.5,177.5V176M940.5,177.5V176M941.5,177.5V176M944.5,177.5V176M947.5,177.5V176M949.5,177.5V176M951.5,177.5V176M955.5,177.5V176M956.5,177.5V176M957.5,177.5V176M959.5,177.5V176M960.5,177.5V176M961.5,177.5V176M1017.5,177.5V172M1018.5,177.5V157M1019.5,177.5V147M1020.5,177.5V169M1021.5,177.5V165M1022.5,177.5V154M1023.5,177.5V173M1024.5,177.5V155M1025.5,177.5V162M1026.5,177.5V165M1027.5,177.5V160M1028.5,177.5V169M1029.5,177.5V150M1030.5,177.5V168M1031.5,177.5V155M1032.5,177.5V142M1033.5,177.5V144M1034.5,177.5V143M1035.5,177.5V116M1036.5,177.5V84M1037.5,177.5V118M1038.5,177.5V98M1039.5,177.5V120M1040.5,177.5V130M1041.5,177.5V114M1042.5,177.5V62M1043.5,177.5V67M1044.5,177.5V97M1045.5,177.5V110M1046.5,177.5V99M1047.5,177.5V166M1048.5,177.5V128M1049.5,177.5V86M1050.5,177.5V93M1051.5,177.5V78M1052.5,177.5V91M1053.5,177.5V103M1054.5,177.5V147M1055.5,177.5V120M1056.5,177.5V170M1057.5,177.5V149M1058.5,177.5V163M1059.5,177.5V160M1060.5,177.5V172M1061.5,177.5V160M1062.5,177.5V160M1063.5,177.5V172M1071.5,177.5V162M1072.5,177.5V134M1073.5,177.5V168M1074.5,177.5V158M1075.5,177.5V171M1076.5,177.5V164M1077.5,177.5V155M1078.5,177.5V161M1079.5,177.5V132M1080.5,177.5V125M1081.5,177.5V149M1082.5,177.5V112M1083.5,177.5V125M1084.5,177.5V139M1085.5,177.5V85M1086.5,177.5V123M1087.5,177.5V166M1088.5,177.5V83M1089.5,177.5V102M1090.5,177.5V76M1091.5,177.5V91M1092.5,177.5V86M1093.5,177.5V86M1094.5,177.5V167M1095.5,177.5V155M1096.5,177.5V79M1097.5,177.5V131M1098.5,177.5V110M1099.5,177.5V145M1100.5,177.5V160M1101.5,177.5V113M1102.5,177.5V132M1103.5,177.5V118M1104.5,177.5V150M1105.5,177.5V113M1106.5,177.5V164M1107.5,177.5V141M1108.5,177.5V153M1109.5,177.5V141M1110.5,177.5V161M1111.5,177.5V165M1112.5,177.5V115M1113.5,177.5V147M1114.5,177.5V113M1115.5,177.5V128M1116.5,177.5V136M1117.5,177.5V127M1118.5,177.5V134M1119.5,177.5V157M1120.5,177.5V174M1121.5,177.5V152M1122.5,177.5V166M1123.5,177.5V156M1124.5,177.5V157M1125.5,177.5V162M1126.5,177.5V156M1127.5,177.5V161M1128.5,177.5V173M1129.5,177.5V168M1130.5,177.5V166M1131.5,177.5V174M1132.5,177.5V166M1133.5,177.5V170" stroke="#44ad8a" stroke-width="1" opacity="0.5"/><path d="M50.5,177.5V100M51.5,177.5V94M52.5,177.5V111M53.5,177.5V88M54.5,177.5V88M55.5,177.5V139M56.5,177.5V112M57.5,177.5V93M58.5,177.5V105M59.5,177.5V82M60.5,177.5V87M61.5,177.5V135M62.5,177.5V175M63.5,177.5V128M64.5,177.5V170M65.5,177.5V111M66.5,177.5V156M67.5,177.5V137M68.5,177.5V99M69.5,177.5V127M70.5,177.5V132M71.5,177.5V123M72.5,177.5V75M73.5,177.5V115M74.5,177.5V88M75.5,177.5V96M76.5,177.5V96M77.5,177.5V114M78.5,177.5V68M79.5,177.5V171M80.5,177.5V125M81.5,177.5V83M82.5,177.5V91M83.5,177.5V70M84.5,177.5V61M85.5,177.5V94M86.5,177.5V90M87.5,177.5V157M88.5,177.5V95M89.5,177.5V56M90.5,177.5V82M91.5,177.5V98M92.5,177.5V128M93.5,177.5V158M94.5,177.5V115M95.5,177.5V170M123.5,177.5V138M124.5,177.5V136M125.5,177.5V176M126.5,177.5V155M127.5,177.5V154M128.5,177.5V161M129.5,177.5V166M130.5,177.5V165M131.5,177.5V145M132.5,177.5V174M133.5,177.5V150M134.5,177.5V125M135.5,177.5V148M136.5,177.5V157M137.5,177.5V115M138.5,177.5V114M139.5,177.5V149M140.5,177.5V155M141.5,177.5V120M142.5,177.5V167M143.5,177.5V156M144.5,177.5V116M145.5,177.5V109M146.5,177.5V122M147.5,177.5V136M148.5,177.5V115M149.5,177.5V172M150.5,177.5V134M151.5,177.5V115M152.5,177.5V130M153.5,177.5V127M154.5,177.5V100M155.5,177.5V139M156.5,177.5V99M157.5,177.5V145M158.5,177.5V147M159.5,177.5V151M160.5,177.5V109M161.5,177.5V106M162.5,177.5V155M163.5,177.5V151M164.5,177.5V107M165.5,177.5V172M166.5,177.5V149M167.5,177.5V127M168.5,177.5V126M169.5,177.5V163M170.5,177.5V172M171.5,177.5V141M172.5,177.5V149M173.5,177.5V165M215.5,177.5V118M216.5,177.5V165M217.5,177.5V155M218.5,177.5V159M219.5,177.5V138M220.5,177.5V141M221.5,177.5V120M222.5,177.5V120M223.5,177.5V95M224.5,177.5V155M225.5,177.5V154M226.5,177.5V113M227.5,177.5V114M228.5,177.5V108M229.5,177.5V106M230.5,177.5V154M231.5,177.5V122M232.5,177.5V107M233.5,177.5V117M234.5,177.5V112M235.5,177.5V119M236.5,177.5V137M237.5,177.5V106M238.5,177.5V110M239.5,177.5V152M240.5,177.5V152M241.5,177.5V135M242.5,177.5V170M243.5,177.5V168M244.5,177.5V172M245.5,177.5V172M255.5,177.5V163M256.5,177.5V160M257.5,177.5V159M258.5,177.5V131M259.5,177.5V126M260.5,177.5V130M261.5,177.5V143M262.5,177.5V115M263.5,177.5V148M264.5,177.5V115M265.5,177.5V137M266.5,177.5V116M267.5,177.5V125M268.5,177.5V146M269.5,177.5V130M270.5,177.5V132M271.5,177.5V125M272.5,177.5V150M273.5,177.5V155M274.5,177.5V163M275.5,177.5V172M276.5,177.5V162M277.5,177.5V162M278.5,177.5V148M279.5,177.5V142M280.5,177.5V164M281.5,177.5V143M282.5,177.5V148M283.5,177.5V162M285.5,177.5V162M286.5,177.5V176M287.5,177.5V174M290.5,177.5V168M291.5,177.5V171M292.5,177.5V173M293.5,177.5V173M294.5,177.5V174M295.5,177.5V176M301.5,177.5V175M302.5,177.5V129M303.5,177.5V123M304.5,177.5V148M305.5,177.5V107M306.5,177.5V126M307.5,177.5V129M308.5,177.5V100M309.5,177.5V108M310.5,177.5V130M311.5,177.5V134M312.5,177.5V108M313.5,177.5V114M314.5,177.5V132M315.5,177.5V130M316.5,177.5V106M317.5,177.5V131M318.5,177.5V132M319.5,177.5V128M320.5,177.5V130M321.5,177.5V77M322.5,177.5V98M323.5,177.5V160M324.5,177.5V103M325.5,177.5V94M326.5,177.5V80M327.5,177.5V101M328.5,177.5V170M329.5,177.5V102M330.5,177.5V169M331.5,177.5V136M332.5,177.5V134M333.5,177.5V116M334.5,177.5V114M335.5,177.5V164M336.5,177.5V153M337.5,177.5V158M338.5,177.5V166M339.5,177.5V168M340.5,177.5V171M341.5,177.5V172M344.5,177.5V175M345.5,177.5V175M346.5,177.5V176M347.5,177.5V175M349.5,177.5V175M350.5,177.5V175M351.5,177.5V175M352.5,177.5V175M354.5,177.5V176M355.5,177.5V175M356.5,177.5V176M357.5,177.5V175M358.5,177.5V175M359.5,177.5V175M360.5,177.5V176M361.5,177.5V175M362.5,177.5V176M363.5,177.5V175M365.5,177.5V176M366.5,177.5V176M367.5,177.5V175M368.5,177.5V176M371.5,177.5V176M374.5,177.5V176M378.5,177.5V175M380.5,177.5V175M381.5,177.5V176M382.5,177.5V176M385.5,177.5V175M387.5,177.5V176M388.5,177.5V176M389.5,177.5V176M391.5,177.5V176M392.5,177.5V176M393.5,177.5V176M395.5,177.5V176M451.5,177.5V169M452.5,177.5V156M453.5,177.5V164M454.5,177.5V126M455.5,177.5V116M456.5,177.5V106M457.5,177.5V99M458.5,177.5V88M459.5,177.5V131M460.5,177.5V91M461.5,177.5V85M462.5,177.5V90M463.5,177.5V139M464.5,177.5V132M465.5,177.5V134M467.5,177.5V173M468.5,177.5V165M473.5,177.5V167M474.5,177.5V159M475.5,177.5V163M481.5,177.5V168M482.5,177.5V124M483.5,177.5V126M484.5,177.5V84M485.5,177.5V130M486.5,177.5V148M487.5,177.5V117M488.5,177.5V96M489.5,177.5V131M490.5,177.5V151M491.5,177.5V155M492.5,177.5V147M493.5,177.5V165M494.5,177.5V156M495.5,177.5V160M496.5,177.5V119M497.5,177.5V156M498.5,177.5V174M499.5,177.5V131M500.5,177.5V159M501.5,177.5V159M502.5,177.5V171M503.5,177.5V175M505.5,177.5V175M506.5,177.5V172M507.5,177.5V173M508.5,177.5V175M509.5,177.5V173M510.5,177.5V173M511.5,177.5V176M512.5,177.5V173M513.5,177.5V176M514.5,177.5V175M515.5,177.5V175M516.5,177.5V176M518.5,177.5V173M519.5,177.5V175M520.5,177.5V173M521.5,177.5V174M522.5,177.5V173M523.5,177.5V173M526.5,177.5V153M527.5,177.5V139M528.5,177.5V121M529.5,177.5V159M530.5,177.5V176M531.5,177.5V126M532.5,177.5V101M533.5,177.5V170M534.5,177.5V142M535.5,177.5V81M536.5,177.5V79M537.5,177.5V161M538.5,177.5V94M539.5,177.5V101M540.5,177.5V146M541.5,177.5V121M542.5,177.5V79M543.5,177.5V82M544.5,177.5V121M545.5,177.5V126M546.5,177.5V133M547.5,177.5V110M548.5,177.5V105M549.5,177.5V152M550.5,177.5V79M551.5,177.5V84M552.5,177.5V132M553.5,177.5V171M554.5,177.5V100M555.5,177.5V128M556.5,177.5V78M557.5,177.5V116M558.5,177.5V174M559.5,177.5V159M560.5,177.5V125M561.5,177.5V119M562.5,177.5V164M563.5,177.5V156M564.5,177.5V136M565.5,177.5V142M566.5,177.5V168M567.5,177.5V158M568.5,177.5V139M569.5,177.5V165M570.5,177.5V148M571.5,177.5V166M572.5,177.5V170M573.5,177.5V170M590.5,177.5V174M591.5,177.5V170M594.5,177.5V174M595.5,177.5V167M596.5,177.5V169M597.5,177.5V173M598.5,177.5V175M599.5,177.5V169M600.5,177.5V168M601.5,177.5V166M602.5,177.5V169M603.5,177.5V171M604.5,177.5V174M605.5,177.5V161M606.5,177.5V158M607.5,177.5V153M609.5,177.5V158M610.5,177.5V153M611.5,177.5V164M612.5,177.5V158M613.5,177.5V170M614.5,177.5V161M615.5,177.5V162M616.5,177.5V171M617.5,177.5V156M618.5,177.5V169M619.5,177.5V154M620.5,177.5V157M621.5,177.5V153M622.5,177.5V169M623.5,177.5V158M624.5,177.5V149M625.5,177.5V144M626.5,177.5V125M627.5,177.5V144M628.5,177.5V138M629.5,177.5V130M630.5,177.5V157M631.5,177.5V136M632.5,177.5V155M633.5,177.5V154M634.5,177.5V92M635.5,177.5V88M636.5,177.5V76M637.5,177.5V107M638.5,177.5V160M639.5,177.5V97M640.5,177.5V150M641.5,177.5V125M642.5,177.5V117M643.5,177.5V72M644.5,177.5V90M645.5,177.5V98M646.5,177.5V55M647.5,177.5V76M648.5,177.5V116M649.5,177.5V94M650.5,177.5V73M651.5,177.5V133M652.5,177.5V109M653.5,177.5V146M654.5,177.5V112M655.5,177.5V151M656.5,177.5V148M657.5,177.5V83M658.5,177.5V128M659.5,177.5V170M660.5,177.5V85M661.5,177.5V115M662.5,177.5V126M663.5,177.5V147M664.5,177.5V138M665.5,177.5V174M666.5,177.5V123M667.5,177.5V131M668.5,177.5V165M669.5,177.5V168M670.5,177.5V172M671.5,177.5V171M672.5,177.5V171M673.5,177.5V176M674.5,177.5V174M676.5,177.5V176M687.5,177.5V148M688.5,177.5V152M689.5,177.5V142M690.5,177.5V162M691.5,177.5V175M692.5,177.5V166M693.5,177.5V123M694.5,177.5V146M695.5,177.5V167M696.5,177.5V109M697.5,177.5V124M698.5,177.5V117M699.5,177.5V171M700.5,177.5V131M701.5,177.5V116M702.5,177.5V144M703.5,177.5V145M704.5,177.5V134M705.5,177.5V117M706.5,177.5V83M707.5,177.5V89M708.5,177.5V92M709.5,177.5V129M710.5,177.5V99M711.5,177.5V132M712.5,177.5V125M713.5,177.5V131M714.5,177.5V115M715.5,177.5V107M716.5,177.5V139M717.5,177.5V136M718.5,177.5V90M719.5,177.5V114M720.5,177.5V145M721.5,177.5V101M722.5,177.5V166M723.5,177.5V125M724.5,177.5V128M725.5,177.5V155M726.5,177.5V118M727.5,177.5V145M728.5,177.5V147M729.5,177.5V155M730.5,177.5V147M731.5,177.5V166M732.5,177.5V165M733.5,177.5V176M734.5,177.5V173M736.5,177.5V171M737.5,177.5V167M738.5,177.5V168M739.5,177.5V170M740.5,177.5V167M741.5,177.5V172M742.5,177.5V170M743.5,177.5V171M744.5,177.5V175M747.5,177.5V125M748.5,177.5V165M749.5,177.5V128M750.5,177.5V122M751.5,177.5V130M752.5,177.5V107M753.5,177.5V124M754.5,177.5V140M755.5,177.5V170M756.5,177.5V135M757.5,177.5V168M758.5,177.5V136M759.5,177.5V148M760.5,177.5V165M761.5,177.5V131M762.5,177.5V141M763.5,177.5V121M764.5,177.5V143M765.5,177.5V152M766.5,177.5V167M767.5,177.5V175M768.5,177.5V137M769.5,177.5V155M770.5,177.5V168M771.5,177.5V164M772.5,177.5V171M773.5,177.5V161M774.5,177.5V163M775.5,177.5V165M776.5,177.5V176M777.5,177.5V166M778.5,177.5V166M779.5,177.5V172M780.5,177.5V174M781.5,177.5V176M782.5,177.5V170M783.5,177.5V174M784.5,177.5V172M785.5,177.5V176M787.5,177.5V174M788.5,177.5V176M790.5,177.5V145M791.5,177.5V108M792.5,177.5V104M793.5,177.5V171M794.5,177.5V107M795.5,177.5V95M796.5,177.5V91M797.5,177.5V134M798.5,177.5V111M799.5,177.5V102M800.5,177.5V99M801.5,177.5V146M802.5,177.5V108M803.5,177.5V103M804.5,177.5V174M805.5,177.5V132M806.5,177.5V128M807.5,177.5V155M808.5,177.5V137M809.5,177.5V165M810.5,177.5V132M811.5,177.5V151M812.5,177.5V156M813.5,177.5V146M814.5,177.5V169M815.5,177.5V162M816.5,177.5V159M818.5,177.5V163M819.5,177.5V171M820.5,177.5V169M821.5,177.5V168M822.5,177.5V169M823.5,177.5V174M824.5,177.5V172M825.5,177.5V170M826.5,177.5V170M827.5,177.5V170M828.5,177.5V172M829.5,177.5V175M830.5,177.5V173M831.5,177.5V175M832.5,177.5V176M833.5,177.5V173M834.5,177.5V174M835.5,177.5V151M836.5,177.5V161M837.5,177.5V152M838.5,177.5V160M839.5,177.5V174M840.5,177.5V128M841.5,177.5V159M842.5,177.5V135M843.5,177.5V152M844.5,177.5V146M845.5,177.5V137M846.5,177.5V131M847.5,177.5V100M848.5,177.5V123M849.5,177.5V129M850.5,177.5V124M851.5,177.5V110M852.5,177.5V169M853.5,177.5V172M854.5,177.5V149M855.5,177.5V134M856.5,177.5V126M857.5,177.5V138M858.5,177.5V131M859.5,177.5V163M860.5,177.5V130M861.5,177.5V156M862.5,177.5V168M863.5,177.5V132M864.5,177.5V142M865.5,177.5V161M866.5,177.5V148M867.5,177.5V173M868.5,177.5V142M869.5,177.5V123M870.5,177.5V128M871.5,177.5V126M872.5,177.5V163M873.5,177.5V162M874.5,177.5V170M875.5,177.5V110M876.5,177.5V110M877.5,177.5V103M878.5,177.5V114M879.5,177.5V154M880.5,177.5V100M881.5,177.5V105M882.5,177.5V126M883.5,177.5V105M884.5,177.5V153M885.5,177.5V123M886.5,177.5V108M887.5,177.5V169M888.5,177.5V139M889.5,177.5V143M890.5,177.5V110M891.5,177.5V98M892.5,177.5V100M893.5,177.5V131M894.5,177.5V91M895.5,177.5V97M896.5,177.5V145M897.5,177.5V121M898.5,177.5V130M899.5,177.5V100M900.5,177.5V129M901.5,177.5V146M902.5,177.5V137M903.5,177.5V126M904.5,177.5V158M905.5,177.5V162M906.5,177.5V98M907.5,177.5V116M908.5,177.5V111M909.5,177.5V122M910.5,177.5V113M911.5,177.5V127M912.5,177.5V136M913.5,177.5V154M914.5,177.5V153M915.5,177.5V167M916.5,177.5V164M917.5,177.5V170M918.5,177.5V171M919.5,177.5V173M924.5,177.5V176M925.5,177.5V176M926.5,177.5V176M927.5,177.5V176M928.5,177.5V176M930.5,177.5V176M931.5,177.5V176M932.5,177.5V176M933.5,177.5V176M934.5,177.5V176M935.5,177.5V176M938.5,177.5V176M939.5,177.5V176M940.5,177.5V176M944.5,177.5V176M945.5,177.5V176M946.5,177.5V176M948.5,177.5V176M953.5,177.5V176M955.5,177.5V176M957.5,177.5V176M959.5,177.5V176M960.5,177.5V176M963.5,177.5V176M1017.5,177.5V176M1018.5,177.5V176M1019.5,177.5V171M1020.5,177.5V147M1021.5,177.5V148M1022.5,177.5V166M1023.5,177.5V160M1024.5,177.5V172M1025.5,177.5V159M1026.5,177.5V161M1027.5,177.5V170M1028.5,177.5V139M1029.5,177.5V150M1030.5,177.5V141M1031.5,177.5V145M1032.5,177.5V122M1033.5,177.5V145M1034.5,177.5V100M1035.5,177.5V153M1036.5,177.5V83M1037.5,177.5V128M1038.5,177.5V99M1039.5,177.5V92M1040.5,177.5V88M1041.5,177.5V100M1042.5,177.5V132M1043.5,177.5V73M1044.5,177.5V96M1045.5,177.5V92M1046.5,177.5V83M1047.5,177.5V167M1048.5,177.5V151M1049.5,177.5V111M1050.5,177.5V77M1051.5,177.5V88M1052.5,177.5V142M1053.5,177.5V115M1054.5,177.5V78M1055.5,177.5V88M1056.5,177.5V124M1057.5,177.5V126M1058.5,177.5V110M1059.5,177.5V121M1060.5,177.5V139M1061.5,177.5V139M1062.5,177.5V152M1063.5,177.5V165M1064.5,177.5V173M1071.5,177.5V171M1072.5,177.5V160M1073.5,177.5V160M1074.5,177.5V158M1075.5,177.5V161M1076.5,177.5V168M1077.5,177.5V160M1078.5,177.5V169M1079.5,177.5V131M1080.5,177.5V134M1081.5,177.5V167M1082.5,177.5V127M1083.5,177.5V146M1084.5,177.5V94M1085.5,177.5V115M1086.5,177.5V82M1087.5,177.5V116M1088.5,177.5V92M1089.5,177.5V134M1090.5,177.5V76M1091.5,177.5V148M1092.5,177.5V84M1093.5,177.5V140M1094.5,177.5V170M1095.5,177.5V122M1096.5,177.5V104M1097.5,177.5V175M1098.5,177.5V168M1099.5,177.5V95M1100.5,177.5V108M1101.5,177.5V171M1102.5,177.5V138M1103.5,177.5V110M1104.5,177.5V88M1105.5,177.5V154M1106.5,177.5V119M1107.5,177.5V129M1108.5,177.5V99M1109.5,177.5V103M1110.5,177.5V123M1111.5,177.5V125M1112.5,177.5V131M1114.5,177.5V144M1115.5,177.5V125M1116.5,177.5V174M1117.5,177.5V128M1118.5,177.5V133M1119.5,177.5V130M1120.5,177.5V151M1121.5,177.5V144M1122.5,177.5V145M1123.5,177.5V157M1124.5,177.5V168M1125.5,177.5V168M1126.5,177.5V155M1127.5,177.5V175M1128.5,177.5V163M1129.5,177.5V165M1130.5,177.5V161M1131.5,177.5V171M1132.5,177.5V173M1133.5,177.5V172" stroke="#44ad8a" stroke-width="1" opacity="0.5"/><rect x="31" y="73" width="1103" height="23" fill="#4a4a4e" opacity="0.28"/><rect x="31" y="72.5" width="1103" height="1" fill="#262628" opacity="0.6"/><rect x="31" y="96" width="1103" height="1" fill="#2a2a2c" opacity="0.25"/><g opacity="1"><rect x="37.4" y="45" width="1.3" height="4.299999999999997" fill="#bdbdbd"/><rect x="58.7" y="46" width="1" height="2.799999999999997" fill="#8a8a8a"/><rect x="79.8" y="46" width="1" height="2.799999999999997" fill="#8a8a8a"/><rect x="101.0" y="46" width="1" height="2.799999999999997" fill="#8a8a8a"/><rect x="122.2" y="46" width="1" height="2.799999999999997" fill="#8a8a8a"/><rect x="143.3" y="46" width="1" height="2.799999999999997" fill="#8a8a8a"/><rect x="164.5" y="46" width="1" height="2.799999999999997" fill="#8a8a8a"/><rect x="185.7" y="46" width="1" height="2.799999999999997" fill="#8a8a8a"/><rect x="206.9" y="46" width="1" height="2.799999999999997" fill="#8a8a8a"/><rect x="228.0" y="46" width="1" height="2.799999999999997" fill="#8a8a8a"/><rect x="249.1" y="45" width="1.3" height="4.299999999999997" fill="#bdbdbd"/><rect x="270.4" y="46" width="1" height="2.799999999999997" fill="#8a8a8a"/><rect x="291.5" y="46" width="1" height="2.799999999999997" fill="#8a8a8a"/><rect x="312.7" y="46" width="1" height="2.799999999999997" fill="#8a8a8a"/><rect x="333.9" y="46" width="1" height="2.799999999999997" fill="#8a8a8a"/><rect x="355.0" y="46" width="1" height="2.799999999999997" fill="#8a8a8a"/><rect x="376.2" y="46" width="1" height="2.799999999999997" fill="#8a8a8a"/><rect x="397.4" y="46" width="1" height="2.799999999999997" fill="#8a8a8a"/><rect x="418.6" y="46" width="1" height="2.799999999999997" fill="#8a8a8a"/><rect x="439.7" y="46" width="1" height="2.799999999999997" fill="#8a8a8a"/><rect x="460.8" y="45" width="1.3" height="4.299999999999997" fill="#bdbdbd"/><rect x="482.1" y="46" width="1" height="2.799999999999997" fill="#8a8a8a"/><rect x="503.2" y="46" width="1" height="2.799999999999997" fill="#8a8a8a"/><rect x="524.4" y="46" width="1" height="2.799999999999997" fill="#8a8a8a"/><rect x="545.6" y="46" width="1" height="2.799999999999997" fill="#8a8a8a"/><rect x="566.8" y="46" width="1" height="2.799999999999997" fill="#8a8a8a"/><rect x="587.9" y="46" width="1" height="2.799999999999997" fill="#8a8a8a"/><rect x="609.1" y="46" width="1" height="2.799999999999997" fill="#8a8a8a"/><rect x="630.3" y="46" width="1" height="2.799999999999997" fill="#8a8a8a"/><rect x="651.4" y="46" width="1" height="2.799999999999997" fill="#8a8a8a"/><rect x="672.5" y="45" width="1.3" height="4.299999999999997" fill="#bdbdbd"/><rect x="693.8" y="46" width="1" height="2.799999999999997" fill="#8a8a8a"/><rect x="714.9" y="46" width="1" height="2.799999999999997" fill="#8a8a8a"/><rect x="736.1" y="46" width="1" height="2.799999999999997" fill="#8a8a8a"/><rect x="757.3" y="46" width="1" height="2.799999999999997" fill="#8a8a8a"/><rect x="778.4" y="46" width="1" height="2.799999999999997" fill="#8a8a8a"/><rect x="799.6" y="46" width="1" height="2.799999999999997" fill="#8a8a8a"/><rect x="820.8" y="46" width="1" height="2.799999999999997" fill="#8a8a8a"/><rect x="842.0" y="46" width="1" height="2.799999999999997" fill="#8a8a8a"/><rect x="863.1" y="46" width="1" height="2.799999999999997" fill="#8a8a8a"/><rect x="884.2" y="45" width="1.3" height="4.299999999999997" fill="#bdbdbd"/><rect x="905.5" y="46" width="1" height="2.799999999999997" fill="#8a8a8a"/><rect x="926.6" y="46" width="1" height="2.799999999999997" fill="#8a8a8a"/><rect x="947.8" y="46" width="1" height="2.799999999999997" fill="#8a8a8a"/><rect x="969.0" y="46" width="1" height="2.799999999999997" fill="#8a8a8a"/><rect x="990.1" y="46" width="1" height="2.799999999999997" fill="#8a8a8a"/><rect x="1011.3" y="46" width="1" height="2.799999999999997" fill="#8a8a8a"/><rect x="1032.5" y="46" width="1" height="2.799999999999997" fill="#8a8a8a"/><rect x="1053.7" y="46" width="1" height="2.799999999999997" fill="#8a8a8a"/><rect x="1074.8" y="46" width="1" height="2.799999999999997" fill="#8a8a8a"/><rect x="1095.9" y="45" width="1.3" height="4.299999999999997" fill="#bdbdbd"/><rect x="1117.2" y="46" width="1" height="2.799999999999997" fill="#8a8a8a"/></g><rect x="31" y="181" width="548" height="10.5" fill="#2b433d"/><rect x="579" y="178" width="36" height="13.5" fill="#4a4a4c" stroke="#5c5c5e" stroke-width="1"/><rect x="596.5" y="179.5" width="1.3" height="11" fill="#d94a2a"/><rect x="1097.5" y="178" width="36.5" height="14" fill="#672b2b"/></g><rect x="30.4" y="26.3" width="1103.6" height="166.4" fill="none" stroke="#d9801f" stroke-width="1.3"/><rect x="31" y="25.8" width="1103" height="1.3" fill="#d0521b"/><g opacity="1"><rect x="582.4" y="49" width="1.4" height="129" fill="#e0452a"/><path d="M578.5 27.5 H587.5 V44 L583 49 L578.5 44 Z" fill="url(#phg3)"/></g><circle cx="1147" cy="36" r="8" fill="#48484a"/><path d="M1147 36 V28 A8 8 0 1 1 1139.48 33.26 Z" fill="#3b7b8e"/><circle cx="1147" cy="56" r="8" fill="#48484a"/><path d="M1147 56 V48 A8 8 0 0 1 1154.73 53.93 Z" fill="#3b7b8e"/><circle cx="1147" cy="75.5" r="8" fill="#48484a"/><path d="M1147 75.5 V67.5 A8 8 0 0 1 1154.88 76.89 Z" fill="#3b7b8e"/><rect x="1136" y="85" width="22" height="22" rx="3" fill="#2c2c2e"/><rect x="1136" y="131" width="22" height="22" rx="3" fill="#2f4048"/><path d="M1139.5 90.5 V101.5 H1154.5" fill="none" stroke="#6b6b6d" stroke-width="1.2"/><path d="M1140.5 101 V96 L1144 92 L1147 95 L1150 93 L1153 101 Z" fill="#6b6b6d"/><path d="M1139.5 113 V124 H1154.5" fill="none" stroke="#6b6b6d" stroke-width="1.2"/><path d="M1141 120h1.5v3.5h-1.5z M1144 116h1.5v7.5h-1.5z M1147 118h1.5v5.5h-1.5z M1150 114h1.5v9.5h-1.5z" fill="#6b6b6d"/><path d="M1146 136 L1150 136 L1148 141 L1151 141 L1145.5 148 L1147 142.5 L1144.5 142.5 Z" fill="#3d96e0"/><rect x="1140.5" y="159" width="12.5" height="9.5" rx="1" fill="none" stroke="#6b6b6d" stroke-width="1.2"/><path d="M1142.5 161.5 H1151 M1142.5 163.8 H1151 M1142.5 166 H1151" stroke="#6b6b6d" stroke-width="1"/><path d="M1148 137 L1148 151 L1151 148 L1153.5 153 L1155.5 152 L1153 147 L1157 147 Z" fill="#111" stroke="#eee" stroke-width="0.9"/></svg><div class="tc">00:01:18,577</div><div class="rl" style="left:27.5px;clip-path:inset(0 0 0 3.5px)">0:01:16</div><div class="rl" style="left:239.2px;">0:01:17</div><div class="rl" style="left:450.9px;">0:01:18</div><div class="rl" style="left:662.6px;">0:01:19</div><div class="rl" style="left:874.3px;">0:01:20</div><div class="rl" style="left:1086.0px;">0:01:21</div><div class="gl" style="width:263px">调整时间轴精度与波形图</div><div class="one">1x</div></div><div class="abs" style="left:1849px;top:780px;width:60px;height:48px;background:#fff;border-radius:7px;box-shadow:0 2px 8px rgba(0,0,0,0.12)"></div>
<svg class="abs" style="left:1859px;top:790px" width="28" height="28" viewBox="0 0 28 28">
<circle cx="14" cy="14" r="11.3" fill="none" stroke="#1f6ae6" stroke-width="1.4"/>
<path d="M7 7 Q14 1.5 22 6 Q24 8 25 11 Q18 6 7 7 Z" fill="#1f62dc"/>
<path d="M4 17 Q10 18 14 21 Q19 24 23 22 Q19 27 12 25.5 Q6 23 4 17 Z" fill="#2a74ee"/>
<path d="M7 14 L11 9.5 L14 13.5 L16.5 17 L20 13" fill="none" stroke="#1f62dc" stroke-width="2" stroke-linecap="round" stroke-linejoin="round"/>
<circle cx="7.5" cy="14" r="1.6" fill="#1f62dc"/><circle cx="20.5" cy="13" r="1.6" fill="#1f62dc"/>
</svg><div class="abs" style="left:1897px;top:0;width:17px;height:928px;background:#f1f1f1"></div>
<div class="abs" style="left:1899px;top:17px;width:13px;height:127px;background:#c1c1c1"></div>
<svg class="abs" style="left:1897px;top:0" width="17" height="928"><path d="M5 11 L8.5 6.6 L12 11 Z" fill="#a3a3a3"/><path d="M5 917 L8.5 921.5 L12 917 Z" fill="#505050"/>
<rect x="8.5" y="225.5" width="7.5" height="51" rx="3.7" fill="#fff" stroke="#6f6f6f" stroke-width="1.3"/><rect x="10.6" y="240" width="3.3" height="34" rx="1.6" fill="#f4913a"/></svg></body></html>
